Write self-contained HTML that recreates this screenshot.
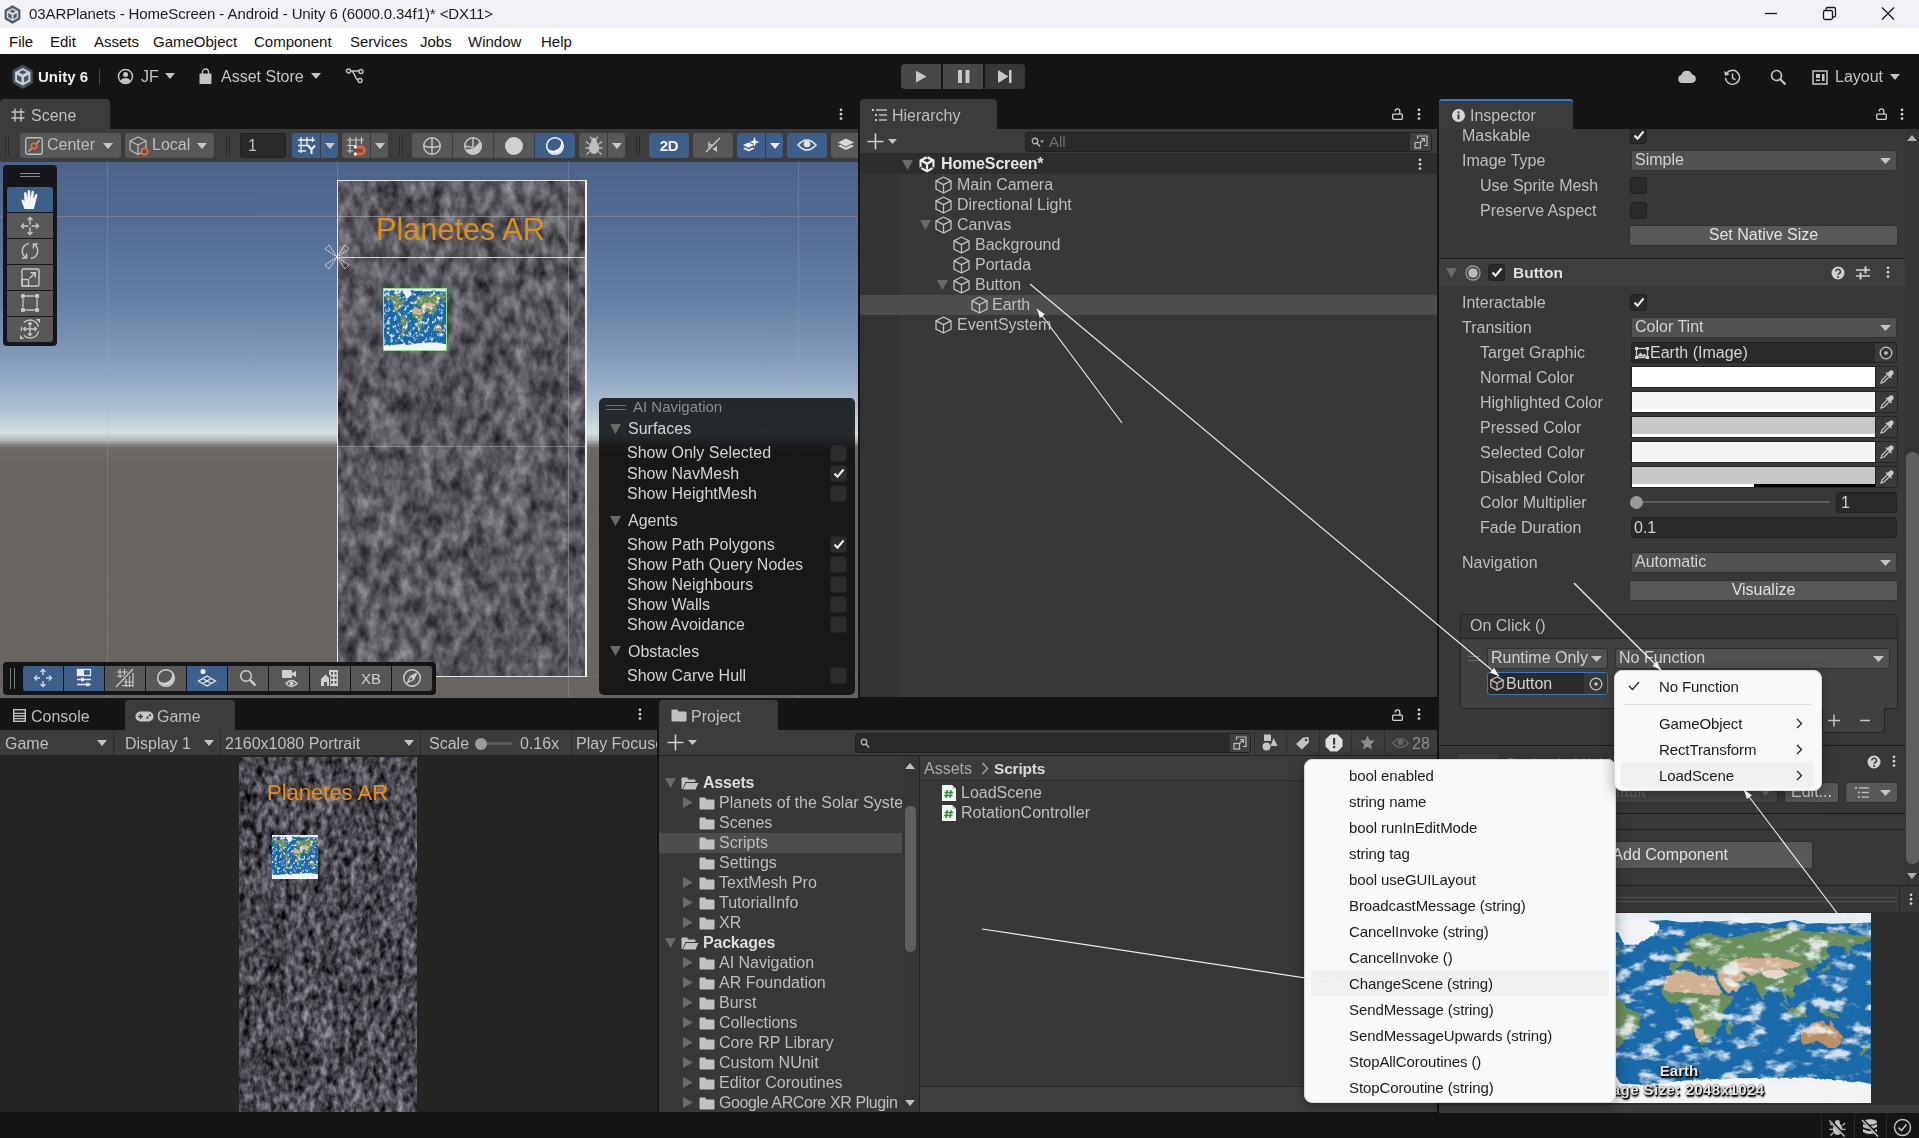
<!DOCTYPE html>
<html><head><meta charset="utf-8"><title>Unity</title>
<style>
*{box-sizing:border-box;margin:0;padding:0}
html,body{width:1919px;height:1138px;overflow:hidden;background:#151515}
body{font-family:"Liberation Sans",sans-serif;font-size:16px;color:#bebebe;position:relative}
.t{will-change:transform}
.w{will-change:auto}
.a{position:absolute}
.t{position:absolute;white-space:nowrap;line-height:20px;height:20px}
.w{font-size:15px;color:#111}
.btn{position:absolute;background:#585858;border-radius:3px}
.blue{background:#46607c}
.inp{position:absolute;background:#2a2a2a;border:1px solid #212121;border-radius:3px}
.chk{position:absolute;width:16px;height:16px;background:#2a2a2a;border:1px solid #212121;border-radius:3px}
.tab{position:absolute;background:#3c3c3c;border-radius:4px 4px 0 0}
svg{position:absolute;overflow:visible}
.pop{position:absolute;background:#f9f9f9;border-radius:8px;box-shadow:0 4px 14px rgba(0,0,0,.35);border:1px solid #d8d8d8}
.pop .t{color:#1a1a1a;font-size:15px;letter-spacing:-0.2px}
</style></head><body>
<!-- TITLEBAR -->
<div class="a" id="title" style="left:0;top:0;width:1919px;height:28px;background:#f1f2f8"></div>
<div class="a" id="menubar" style="left:0;top:28px;width:1919px;height:26px;background:#fff"></div>
<div class="a" id="apptb" style="left:0;top:54px;width:1919px;height:75px;background:#151515"></div>
<!--SECTION:TOP-->
<!-- title -->
<svg style="left:4px;top:4.5px" width="17" height="19" viewBox="0 0 22 26"><path d="M11 0.8 L21.3 6.7 V19.3 L11 25.2 L0.7 19.3 V6.7 Z" fill="#55606c" stroke="#3a434c" stroke-width="0.8"/><path d="M11 4 L18.8 8.5 V17.5 L11 22 L3.2 17.5 V8.5 Z" fill="#d5dae2"/><g fill="#55606c"><path d="M11 6.2 L15 8.5 L11 10.8 L7 8.5 Z"/><path d="M5.2 11 L9.8 13.6 V19 L5.2 16.3 Z"/><path d="M16.8 11 L12.2 13.6 V19 L16.8 16.3 Z"/></g></svg>
<div class="t w" style="left:29px;top:4px;color:#1b1b1b;letter-spacing:-.09px;will-change:transform">03ARPlanets - HomeScreen - Android - Unity 6 (6000.0.34f1)* &lt;DX11&gt;</div>
<svg style="left:1760px;top:0" width="140" height="28" viewBox="0 0 140 28"><g stroke="#1a1a1a" stroke-width="1.3" fill="none"><path d="M5 13.5 H17"/><rect x="63.5" y="10.5" width="9" height="9" rx="1.5"/><path d="M66 10.5 V9 a1.5 1.5 0 0 1 1.5 -1.5 H74 a1.5 1.5 0 0 1 1.5 1.5 V15.5 a1.5 1.5 0 0 1 -1.5 1.5 H72.5"/><path d="M122 7.5 L134 19.5 M134 7.5 L122 19.5"/></g></svg>
<!-- menu -->
<div class="t w" style="left:9px;top:32px">File</div>
<div class="t w" style="left:50px;top:32px">Edit</div>
<div class="t w" style="left:94px;top:32px">Assets</div>
<div class="t w" style="left:153px;top:32px">GameObject</div>
<div class="t w" style="left:254px;top:32px">Component</div>
<div class="t w" style="left:350px;top:32px">Services</div>
<div class="t w" style="left:420px;top:32px">Jobs</div>
<div class="t w" style="left:468px;top:32px">Window</div>
<div class="t w" style="left:541px;top:32px">Help</div>
<!-- app toolbar -->
<svg style="left:11.5px;top:64px" width="21.5" height="25.5" viewBox="0 0 22 26"><path d="M11 0.8 L21.3 6.7 V19.3 L11 25.2 L0.7 19.3 V6.7 Z" fill="#4a545f" stroke="#2f363e" stroke-width="0.8"/><path d="M11 4 L18.8 8.5 V17.5 L11 22 L3.2 17.5 V8.5 Z" fill="#cdd2da"/><g fill="#4a545f"><path d="M11 6.2 L15 8.5 L11 10.8 L7 8.5 Z"/><path d="M5.2 11 L9.8 13.6 V19 L5.2 16.3 Z"/><path d="M16.8 11 L12.2 13.6 V19 L16.8 16.3 Z"/></g></svg>
<div class="t" style="left:38px;top:67px;color:#f0f0f0;font-weight:bold;font-size:15px">Unity 6</div>
<div class="a" style="left:99px;top:69px;width:1px;height:16px;background:#4a4a4a"></div>
<svg style="left:117px;top:68px" width="17" height="17" viewBox="0 0 17 17"><circle cx="8.5" cy="8.5" r="7" fill="none" stroke="#c4c4c4" stroke-width="1.5"/><circle cx="8.5" cy="6.6" r="2.5" fill="#c4c4c4"/><path d="M3.6 12.8 a5.2 4.2 0 0 1 9.8 0 a6.5 6.5 0 0 1 -9.8 0z" fill="#c4c4c4"/></svg>
<div class="t" style="left:141px;top:67px;color:#c4c4c4">JF</div>
<svg style="left:164px;top:72px" width="12" height="8" viewBox="0 0 12 8"><path d="M1 1 H11 L6 7 Z" fill="#c4c4c4"/></svg>
<svg style="left:198px;top:68px" width="15" height="17" viewBox="0 0 15 17"><path d="M1.5 5.5 H13.5 V15 a1 1 0 0 1 -1 1 H2.5 a1 1 0 0 1 -1 -1 Z" fill="#c4c4c4"/><path d="M4.5 6 V4 a3 3 0 0 1 6 0 V6" fill="none" stroke="#c4c4c4" stroke-width="1.3"/></svg>
<div class="t" style="left:221px;top:67px;color:#c4c4c4">Asset Store</div>
<svg style="left:310px;top:72px" width="12" height="8" viewBox="0 0 12 8"><path d="M1 1 H11 L6 7 Z" fill="#c4c4c4"/></svg>
<svg style="left:345px;top:67px" width="20" height="18" viewBox="0 0 20 18"><g fill="none" stroke="#c4c4c4" stroke-width="1.4"><circle cx="3.5" cy="4" r="2"/><circle cx="16" cy="4.5" r="2"/><circle cx="15" cy="13.5" r="2"/><path d="M5.5 4 H14 M7 4 C9.5 5 10 12 13 13.2"/></g></svg>
<div class="a" style="left:901px;top:64px;width:40px;height:25px;background:#484848;border-radius:4px 0 0 4px"></div>
<div class="a" style="left:943px;top:64px;width:40px;height:25px;background:#484848"></div>
<div class="a" style="left:985px;top:64px;width:40px;height:25px;background:#383838;border-radius:0 4px 4px 0"></div>
<svg style="left:901px;top:64px" width="124" height="25" viewBox="0 0 124 25"><g fill="#c8c8c8"><path d="M15 6.8 L25.6 12.5 L15 18.6 Z"/><rect x="57" y="6" width="4" height="13"/><rect x="64.5" y="6" width="4" height="13"/><path d="M97 6 L107.5 12.5 L97 19 Z"/><rect x="108" y="6" width="2.5" height="13"/></g></svg>
<svg style="left:1677px;top:69px" width="20" height="16" viewBox="0 0 20 16"><path d="M5 14 a4 4 0 0 1 -0.6 -7.9 a5.5 5.5 0 0 1 10.6 -0.6 a4.3 4.3 0 0 1 0.3 8.5 Z" fill="#c4c4c4"/></svg>
<svg style="left:1723px;top:68px" width="19" height="19" viewBox="0 0 19 19"><g fill="none" stroke="#c4c4c4" stroke-width="1.5"><path d="M3.2 6.2 A7 7 0 1 1 2.5 10"/><path d="M9.5 5.5 V10 L12.5 11.8"/></g><path d="M1 3 L2.2 8 L6.8 6.2 Z" fill="#c4c4c4"/></svg>
<svg style="left:1769px;top:68px" width="19" height="19" viewBox="0 0 19 19"><g fill="none" stroke="#c4c4c4"><circle cx="7.5" cy="7.5" r="5" stroke-width="1.6"/><path d="M11.3 11.3 L16.5 16.5" stroke-width="2.2"/></g></svg>
<svg style="left:1812px;top:70px" width="16" height="15" viewBox="0 0 16 15"><rect x="1" y="1" width="14" height="13" fill="none" stroke="#c4c4c4" stroke-width="1.5"/><rect x="4" y="4" width="4" height="4" fill="#c4c4c4"/><rect x="10" y="4" width="2.5" height="7" fill="#c4c4c4"/><rect x="4" y="9.5" width="4" height="1.5" fill="#c4c4c4"/></svg>
<div class="t" style="left:1835px;top:67px;color:#c4c4c4">Layout</div>
<svg style="left:1889px;top:73px" width="12" height="8" viewBox="0 0 12 8"><path d="M1 1 H11 L6 7 Z" fill="#c4c4c4"/></svg>
<!--END:TOP-->
<!--SECTION:SCENE-->
<svg width="0" height="0" style="position:absolute"><defs>
<filter id="stone" x="0" y="0" width="100%" height="100%" color-interpolation-filters="sRGB"><feTurbulence type="fractalNoise" baseFrequency="0.095 0.06" numOctaves="4" seed="7"/><feColorMatrix values="1 0 0 0 0  1 0 0 0 0  1 0 0 0 0  0 0 0 0 1" result="n1"/><feTurbulence type="fractalNoise" baseFrequency="0.03 0.02" numOctaves="2" seed="23"/><feColorMatrix values="1 0 0 0 0  1 0 0 0 0  1 0 0 0 0  0 0 0 0 1" result="n2"/><feComposite in="n1" in2="n2" operator="arithmetic" k1="0" k2="1.1" k3="0.4" k4="-0.25" result="n"/><feColorMatrix in="n" values="0.52 0 0 0 0.095  0.51 0 0 0 0.093  0.525 0 0 0 0.112  0 0 0 0 1"/></filter>
<filter id="stone2" x="0" y="0" width="100%" height="100%" color-interpolation-filters="sRGB"><feTurbulence type="fractalNoise" baseFrequency="0.17 0.11" numOctaves="4" seed="9"/><feColorMatrix values="1 0 0 0 0  1 0 0 0 0  1 0 0 0 0  0 0 0 0 1" result="n1"/><feTurbulence type="fractalNoise" baseFrequency="0.04 0.028" numOctaves="2" seed="31"/><feColorMatrix values="1 0 0 0 0  1 0 0 0 0  1 0 0 0 0  0 0 0 0 1" result="n2"/><feComposite in="n1" in2="n2" operator="arithmetic" k1="0" k2="1.15" k3="0.45" k4="-0.3" result="n"/><feColorMatrix in="n" values="0.66 0 0 0 -0.04  0.65 0 0 0 -0.04  0.68 0 0 0 -0.025  0 0 0 0 1"/></filter>
<filter id="cloud" x="0" y="0" width="100%" height="100%" color-interpolation-filters="sRGB"><feTurbulence type="fractalNoise" baseFrequency="0.05 0.085" numOctaves="5" seed="11"/><feColorMatrix values="0 0 0 0 0.96  0 0 0 0 0.97  0 0 0 0 0.98  4.5 0 0 0 -2.35"/></filter>
<filter id="rough"><feTurbulence type="fractalNoise" baseFrequency="0.25" numOctaves="2" seed="4" result="t"/><feDisplacementMap in="SourceGraphic" in2="t" scale="3.5"/></filter>
<symbol id="earth" viewBox="0 0 360 180" preserveAspectRatio="none">
<rect width="360" height="180" fill="#1a69a9"/>
<g filter="url(#rough)">
<g fill="#6b8f5d">
<polygon points="12,24 24,19 40,20 55,20 70,22 85,18 98,17 102,28 90,32 98,38 102,35 115,30 124,38 114,46 110,48 105,55 99,59 100,65 97,60 90,61 83,64 83,71 89,72 92,69 93,74 97,80 102,82 95,79 85,74 75,70 70,66 67,59 62,56 56,50 56,42 48,35 40,30 28,32 20,35 15,30 12,24"/><polygon points="100,81 108,78 118,80 128,85 130,90 145,96 142,104 139,112 132,116 126,124 122,128 117,132 114,137 112,144 106,140 107,128 109,118 110,108 104,104 99,95 100,81"/><polygon points="163,75 164,68 170,60 174,55 183,53 190,53 191,57 200,59 205,58 212,59 215,66 218,72 223,78 231,79 228,85 221,93 219,98 220,105 215,112 212,117 207,123 200,125 197,119 192,108 193,98 189,91 189,86 182,84 172,86 167,82 163,75"/><polygon points="224,106 229,102 230,106 227,115 224,114 224,106"/><polygon points="170,54 171,47 178,47 179,44 175,42 182,39 188,36 188,33 192,35 190,31 185,31 185,28 192,24 198,21 208,19 220,23 224,24 240,21 242,35 235,45 228,48 220,45 215,48 208,49 204,54 200,51 196,49 198,50 195,52 192,46 188,46 183,47 180,51 175,54 170,54"/><polygon points="175,40 181,39 180,36 178,34 177,32 174,33 175,36 177,37 175,38 175,40"/><polygon points="240,21 248,18 260,17 275,14 285,13 293,16 310,18 320,17 340,20 350,21 360,22 360,25 352,29 343,30 342,34 336,39 335,32 322,31 318,36 321,40 315,46 310,48 307,52 306,56 302,51 298,52 302,60 299,65 293,68 288,69 287,73 289,78 285,81 281,77 280,83 284,89 280,86 278,80 277,74 272,69 268,68 264,72 260,77 258,82 253,73 252,69 247,65 241,65 237,64 232,62 229,60 231,65 236,66 239,69 235,73 225,77 223,74 219,69 215,62 216,54 208,53 208,49 215,48 220,45 228,48 235,45 242,35 240,21"/><polygon points="294,112 302,108 306,104 311,102 316,102 317,106 321,107 322,101 326,109 333,116 331,124 327,128 320,128 316,125 311,122 304,123 296,125 294,118 294,112" fill="#b98f66"/><polygon points="352,125 358,128 355,131 351,135 347,136 352,131 352,125"/><polygon points="275,85 284,95 286,96 294,98 300,99 298,93 297,87 290,89 283,92 278,87 275,85"/><polygon points="311,91 321,93 328,96 330,100 323,99 318,98 312,93 311,91"/><polygon points="310,58 315,56 320,55 321,50 322,45 320,48 317,53 312,55 310,58"/>
</g>
<g fill="#d0b092">
<polygon points="165,73 167,62 175,56 190,55 200,60 212,60 216,68 220,75 215,78 200,77 185,75 172,75"/>
<polygon points="216,57 225,54 235,54 242,60 240,64 235,65 230,62 236,68 236,72 226,76 222,72 217,64"/>
<polygon points="230,45 240,42 255,43 270,42 285,45 295,48 290,52 280,53 268,55 258,54 248,60 240,55 232,52"/>
<polygon points="194,108 202,110 205,118 199,123 195,117"/>
<polygon points="62,56 75,52 80,60 74,67 68,62"/>
<polygon points="110,110 114,115 114,135 110,138 109,120"/>
</g>
<g fill="#e2d8cc"><polygon points="256,56 264,54 276,54 282,57 278,61 268,62 260,60"/></g>
<g fill="#f0f2f5"><polygon points="128,30 138,30 158,20 162,12 150,7 120,8 107,12 122,18 128,30"/><polygon points="60,14 105,7 95,14 80,17"/><polygon points="0,162 30,166 70,163 110,160 120,154 125,162 160,163 180,159 220,157 260,156 300,156 330,158 350,162 360,162 360,180 0,180"/></g>
</g>
<rect width="360" height="180" filter="url(#cloud)" opacity=".85"/>
<path d="M0 0 H360 L360 9.0 L348 9.5 L336 9.7 L324 10.3 L312 9.5 L300 10.2 L288 6.6 L276 8.4 L264 10.3 L252 9.1 L240 10.1 L228 7.0 L216 8.4 L204 7.5 L192 8.7 L180 8.8 L168 6.6 L156 7.4 L144 7.6 L132 10.2 L120 9.6 L108 7.1 L96 9.7 L84 7.1 L72 9.0 L60 7.0 L48 6.5 L36 10.0 L24 7.3 L12 7.4 L0 10.4 Z" fill="#f2f4f6" opacity=".94"/>
<path d="M0 180 H360 L360 161.9 L348 159.3 L336 162.3 L324 160.4 L312 161.1 L300 158.9 L288 162.2 L276 161.1 L264 162.3 L252 162.0 L240 159.3 L228 159.6 L216 161.7 L204 161.7 L192 161.3 L180 162.4 L168 163.7 L156 161.0 L144 164.1 L132 162.5 L120 162.4 L108 164.7 L96 163.2 L84 162.4 L72 163.2 L60 164.2 L48 161.3 L36 165.4 L24 161.1 L12 164.4 L0 164.8 Z" fill="#f2f4f6" opacity=".96"/>
</symbol>
</defs></svg>

<div class="tab" style="left:0;top:99px;width:110px;height:30px"></div>
<svg style="left:11px;top:108px" width="14" height="14" viewBox="0 0 14 14"><path d="M4 0.5 V13.5 M10 0.5 V13.5 M0.5 4 H13.5 M0.5 10 H13.5" stroke="#c4c4c4" stroke-width="1.4" fill="none"/></svg>
<div class="t" style="left:31px;top:106px">Scene</div>
<svg style="left:839px;top:108.2px" width="4" height="13" viewBox="0 0 4 13"><g fill="#d0d0d0"><circle cx="2" cy="1.8" r="1.35"/><circle cx="2" cy="6.2" r="1.35"/><circle cx="2" cy="10.6" r="1.35"/></g></svg>
<div class="a" id="scenetb" style="left:0;top:129px;width:858px;height:33px;background:#3c3c3c"></div>
<div class="a" style="left:5px;top:135px;width:1px;height:21px;background:#2a2a2a"></div><div class="a" style="left:8px;top:135px;width:1px;height:21px;background:#2a2a2a"></div>
<div class="a" style="left:20px;top:133px;width:101px;height:25px;background:#585858;border-radius:3px"></div>
<svg style="left:25px;top:137px" width="18" height="18" viewBox="0 0 18 18"><rect x=".75" y=".75" width="16.5" height="16.5" rx="2" fill="none" stroke="#bdbdbd" stroke-width="1.3"/><path d="M3.5 14.5 L14.5 3.5" stroke="#bdbdbd" stroke-width="1.2"/><circle cx="9" cy="9" r="2.8" fill="#585858" stroke="#f0683c" stroke-width="1.6"/></svg>
<div class="t" style="left:47px;top:135px">Center</div>
<svg style="left:103px;top:143px" width="10" height="6" viewBox="0 0 10 6"><path d="M0 0 H10 L5 6 Z" fill="#c8c8c8"/></svg>
<div class="a" style="left:125px;top:133px;width:89px;height:25px;background:#585858;border-radius:3px"></div>
<svg style="left:129px;top:136px" width="22" height="21" viewBox="0 0 22 21"><g fill="none" stroke="#bdbdbd" stroke-width="1.3" stroke-linejoin="round"><path d="M9 1 L17 5 V14 L9 18.5 L1 14 V5 Z"/><path d="M1 5 L9 9 L17 5 M9 9 V18.5"/></g><circle cx="15.5" cy="15.5" r="3.2" fill="#585858" stroke="#f0683c" stroke-width="1.7"/></svg>
<div class="t" style="left:152px;top:135px">Local</div>
<svg style="left:197px;top:143px" width="10" height="6" viewBox="0 0 10 6"><path d="M0 0 H10 L5 6 Z" fill="#c8c8c8"/></svg>
<div class="a" style="left:226px;top:135px;width:1px;height:21px;background:#2a2a2a"></div><div class="a" style="left:229px;top:135px;width:1px;height:21px;background:#2a2a2a"></div>
<div class="inp" style="left:240px;top:133px;width:46px;height:25px"></div><div class="t" style="left:248px;top:136px">1</div>
<div class="a" style="left:292px;top:133px;width:28px;height:25px;background:#3e5f8a;border-radius:3px 0 0 3px"></div>
<div class="a" style="left:321px;top:133px;width:17px;height:25px;background:#3e5f8a;border-radius:0 3px 3px 0"></div>
<svg style="left:325px;top:143px" width="10" height="6" viewBox="0 0 10 6"><path d="M0 0 H10 L5 6 Z" fill="#c8c8c8"/></svg>
<svg style="left:297px;top:136px" width="20" height="19" viewBox="0 0 20 19"><g stroke="#eee" stroke-width="1.3" fill="none"><path d="M4 1 V17 M10 1 V9 M15.5 1 V6 M1 4 H18 M1 9.5 H12 M1 15 H9"/><path d="M11 9.5 L14.5 13.5 L18 9.5 M14.5 13.5 V18" stroke-width="2"/></g></svg>
<div class="a" style="left:342px;top:133px;width:28px;height:25px;background:#585858;border-radius:3px 0 0 3px"></div>
<div class="a" style="left:371px;top:133px;width:17px;height:25px;background:#585858;border-radius:0 3px 3px 0"></div>
<svg style="left:375px;top:143px" width="10" height="6" viewBox="0 0 10 6"><path d="M0 0 H10 L5 6 Z" fill="#c8c8c8"/></svg>
<svg style="left:346px;top:136px" width="22" height="20" viewBox="0 0 22 20"><g stroke="#c8c8c8" stroke-width="1.2" fill="none"><path d="M4 1 V17 M10 1 V10 M15.5 1 V8 M1 4 H18 M1 9.5 H9 M1 15 H7"/></g><path d="M9.5 11 H15 a3.5 3.5 0 0 1 0 7 H9.5" fill="none" stroke="#f0592b" stroke-width="2.8"/><rect x="8" y="9.6" width="2.6" height="2.8" fill="#fff"/><rect x="8" y="16.6" width="2.6" height="2.8" fill="#fff"/></svg>
<div class="a" style="left:399px;top:135px;width:1px;height:21px;background:#2a2a2a"></div><div class="a" style="left:402px;top:135px;width:1px;height:21px;background:#2a2a2a"></div>
<div class="a" style="left:412px;top:133px;width:40px;height:25px;background:#585858;border-radius:3px 0 0 3px"></div>
<div class="a" style="left:453px;top:133px;width:40px;height:25px;background:#585858;border-radius:0"></div>
<div class="a" style="left:494px;top:133px;width:40px;height:25px;background:#585858;border-radius:0"></div>
<div class="a" style="left:535px;top:133px;width:40px;height:25px;background:#3e5f8a;border-radius:0 3px 3px 0"></div>
<svg style="left:422px;top:136px" width="20" height="20" viewBox="0 0 20 20"><g fill="none" stroke="#c8c8c8" stroke-width="1.4"><circle cx="10" cy="10" r="8.3"/><path d="M10 1.7 V18.3 M1.7 10 Q10 12.5 18.3 10"/></g></svg>
<svg style="left:463px;top:136px" width="20" height="20" viewBox="0 0 20 20"><g fill="none" stroke="#c8c8c8" stroke-width="1.4"><circle cx="10" cy="10" r="8.3"/><path d="M10 1.7 V11 M1.7 10 Q6 11.5 10 11"/></g><path d="M3 13 Q9 14 14 9 Q17 6 16 4 A8.3 8.3 0 0 1 5 16.5 Z" fill="#c8c8c8"/></svg>
<svg style="left:504px;top:136px" width="20" height="20" viewBox="0 0 20 20"><circle cx="10" cy="10" r="9" fill="#d0d0d0"/></svg>
<svg style="left:545px;top:136px" width="20" height="20" viewBox="0 0 20 20"><circle cx="10" cy="10" r="8.3" fill="none" stroke="#f2f2f2" stroke-width="1.5"/><path d="M2.5 12 A8 8 0 0 0 17.5 12 Q18.5 8 16 4.5 Q17 12 10 14.5 Q5 15.5 2.5 12Z" fill="#f2f2f2"/></svg>
<div class="a" style="left:579px;top:133px;width:28px;height:25px;background:#585858;border-radius:3px 0 0 3px"></div>
<div class="a" style="left:608px;top:133px;width:17px;height:25px;background:#585858;border-radius:0 3px 3px 0"></div>
<svg style="left:612px;top:143px" width="10" height="6" viewBox="0 0 10 6"><path d="M0 0 H10 L5 6 Z" fill="#c8c8c8"/></svg>
<svg style="left:584px;top:136px" width="20" height="20" viewBox="0 0 20 20"><ellipse cx="10" cy="11.5" rx="5.2" ry="6.5" fill="#bdbdbd"/><circle cx="10" cy="4.6" r="2.8" fill="#bdbdbd"/><g stroke="#bdbdbd" stroke-width="1.3" fill="none"><path d="M5 8 L2 5.5 M15 8 L18 5.5 M4.8 12 H1.5 M15.2 12 H18.5 M5.5 15.5 L2.5 18.5 M14.5 15.5 L17.5 18.5 M7.5 2.5 L6 0.8 M12.5 2.5 L14 0.8"/></g></svg>
<div class="a" style="left:636px;top:135px;width:1px;height:21px;background:#2a2a2a"></div><div class="a" style="left:639px;top:135px;width:1px;height:21px;background:#2a2a2a"></div>
<div class="a" style="left:649px;top:133px;width:40px;height:25px;background:#3e5f8a;border-radius:3px"></div>
<div class="t" style="left:649px;top:136px;width:40px;text-align:center;color:#f2f2f2;font-weight:bold;font-size:15px;letter-spacing:-.3px">2D</div>
<div class="a" style="left:693px;top:133px;width:40px;height:25px;background:#585858;border-radius:3px"></div>
<svg style="left:704px;top:137px" width="18" height="17" viewBox="0 0 18 17"><path d="M2 15 L16 1" stroke="#c8c8c8" stroke-width="1.5"/><path d="M5 5 V11 M8 8 L5 8" stroke="#c8c8c8" stroke-width="1.3" fill="none"/><path d="M13 9 V15 L8.5 12 Z" fill="#c8c8c8"/></svg>
<div class="a" style="left:737px;top:133px;width:28px;height:25px;background:#3e5f8a;border-radius:3px 0 0 3px"></div>
<div class="a" style="left:766px;top:133px;width:17px;height:25px;background:#3e5f8a;border-radius:0 3px 3px 0"></div>
<svg style="left:770px;top:143px" width="10" height="6" viewBox="0 0 10 6"><path d="M0 0 H10 L5 6 Z" fill="#e8e8e8"/></svg>
<svg style="left:742px;top:136px" width="19" height="19" viewBox="0 0 19 19"><g fill="#f2f2f2"><path d="M1 9 L6.5 6.5 L12 9 L6.5 11.8 Z"/><path d="M1 12.5 L3 11.6 L6.5 13.4 L10.5 11.4 L12.5 12.5 L6.5 15.6 Z"/><path d="M12.5 1 L13.8 4.7 L17.5 6 L13.8 7.3 L12.5 11 L11.2 7.3 L7.5 6 L11.2 4.7 Z"/></g></svg>
<div class="a" style="left:787px;top:133px;width:40px;height:25px;background:#3e5f8a;border-radius:3px"></div>
<svg style="left:797px;top:138px" width="20" height="14" viewBox="0 0 20 14"><path d="M1 7 Q10 -3 19 7 Q10 17 1 7 Z" fill="none" stroke="#e8e8e8" stroke-width="1.5"/><circle cx="10" cy="6" r="3.3" fill="#e0e0e0"/></svg>
<div class="a" style="left:831px;top:133px;width:27px;height:25px;background:#585858;border-radius:3px 0 0 3px"></div>
<svg style="left:837px;top:138px" width="18" height="15" viewBox="0 0 18 15"><g fill="#d8d8d8"><path d="M9 0.5 L17 4.5 L9 8.5 L1 4.5 Z"/><path d="M1 8 L3.5 6.8 L9 9.6 L14.5 6.8 L17 8 L9 12 Z"/></g></svg>
<!-- scene view -->
<div class="a" id="sceneview" style="left:0;top:162px;width:858px;height:536px;overflow:hidden;background:linear-gradient(to bottom,#4c6389 0px,#536b93 55px,#647ea4 135px,#7790b3 175px,#91a8c4 215px,#aabdd0 243px,#c4d2da 260px,#d3dfe2 271px,#b5babb 278px,#6e6865 285px,#6b6562 300px,#6a6461 536px)">
 <div class="a" style="left:107px;top:0;width:1px;height:536px;background:rgba(170,175,185,.28)"></div>
 <div class="a" style="left:337px;top:0;width:1px;height:536px;background:rgba(170,175,185,.28)"></div>
 <div class="a" style="left:568px;top:0;width:1px;height:536px;background:rgba(170,175,185,.28)"></div>
 <div class="a" style="left:798px;top:0;width:1px;height:536px;background:rgba(170,175,185,.28)"></div>
 <div class="a" style="left:0;top:54px;width:858px;height:1px;background:rgba(160,160,150,.4)"></div>
 <div class="a" style="left:0;top:284px;width:858px;height:1px;background:rgba(150,150,150,.35)"></div>
 <div class="a" style="left:0;top:514px;width:858px;height:1px;background:rgba(150,150,150,.25)"></div>
 <svg style="left:337px;top:18px" width="250" height="497"><rect width="250" height="497" filter="url(#stone)"/></svg>
 <div class="a" style="left:337px;top:18px;width:250px;height:497px;border:1px solid #e6e6e6;border-right:2px solid #eee"></div>
 <div class="a" style="left:337px;top:54px;width:249px;height:1px;background:rgba(190,190,195,.5)"></div>
 <div class="a" style="left:568px;top:18px;width:1px;height:497px;background:rgba(190,190,195,.4)"></div>
 <div class="a" style="left:337px;top:284px;width:249px;height:1px;background:rgba(190,190,195,.45)"></div>
 <div class="a" style="left:337px;top:95px;width:249px;height:1px;background:rgba(235,235,235,.85)"></div>
 <div class="t" style="left:376px;top:50px;height:36px;line-height:36px;font-size:30.7px;color:#e28f17">Planetes AR</div>
 <svg style="left:383px;top:126px" width="64" height="63"><use href="#earth" width="64" height="63"/><rect x=".5" y=".5" width="63" height="62" fill="none" stroke="#8fe08a" stroke-width="1"/></svg>
 <svg style="left:322px;top:80px" width="30" height="30" viewBox="-15 -15 30 30"><g fill="none" stroke="#f2f2f2" stroke-width="1" stroke-dasharray="1.5 0.8"><path d="M0 0 L-12 -8 L-8 -12 Z"/><path d="M0 0 L12 -8 L8 -12 Z"/><path d="M0 0 L-12 8 L-8 12 Z"/><path d="M0 0 L12 8 L8 12 Z"/></g></svg>
</div>
<div class="a" style="left:3px;top:165px;width:54px;height:181px;background:#15171c;border-radius:4px"></div>
<div class="a" style="left:20px;top:173px;width:20px;height:1px;background:#8a8a8a"></div><div class="a" style="left:20px;top:176px;width:20px;height:1px;background:#8a8a8a"></div>
<div class="a" style="left:7px;top:187px;width:46px;height:25px;background:#3e5f8a;border-radius:3px 3px 0 0"></div>
<div class="a" style="left:7px;top:213px;width:46px;height:25px;background:#585858;border-radius:0"></div>
<div class="a" style="left:7px;top:239px;width:46px;height:25px;background:#585858;border-radius:0"></div>
<div class="a" style="left:7px;top:265px;width:46px;height:25px;background:#585858;border-radius:0"></div>
<div class="a" style="left:7px;top:291px;width:46px;height:25px;background:#585858;border-radius:0"></div>
<div class="a" style="left:7px;top:317px;width:46px;height:25px;background:#585858;border-radius:0 0 3px 3px"></div>
<svg style="left:20px;top:189px" width="20" height="21" viewBox="0 0 20 21"><path d="M4.5 20 L2 13.5 Q1 11 2.2 10.5 Q3.4 10 4.5 12.5 L4 4.5 Q4 3 5.2 3 Q6.3 3 6.5 4.5 L7.3 9.5 L7.6 2.5 Q7.7 1 8.9 1 Q10.1 1 10.2 2.5 L10.4 9.3 L11.5 3 Q11.8 1.6 12.9 1.8 Q14 2 13.9 3.5 L13.3 10 L15.2 5.8 Q15.8 4.6 16.8 5 Q17.7 5.5 17.3 6.8 L15.5 13.5 Q15 17 13.5 20 Z" fill="#f4f4f4"/></svg>
<svg style="left:20px;top:216px" width="20" height="20" viewBox="0 0 20 20"><g fill="none" stroke="#c8c8c8" stroke-width="1.4"><path d="M10 1.5 V8.5 M10 11.5 V18.5 M1.5 10 H8.5 M11.5 10 H18.5"/><path d="M7.5 4 L10 1.5 L12.5 4 M7.5 16 L10 18.5 L12.5 16 M4 7.5 L1.5 10 L4 12.5 M16 7.5 L18.5 10 L16 12.5"/></g></svg>
<svg style="left:20px;top:241px" width="20" height="20" viewBox="0 0 20 20"><g fill="none" stroke="#c8c8c8" stroke-width="1.4"><path d="M9 2.6 A7.5 7.5 0 0 0 6.2 16.6 M11 17.4 A7.5 7.5 0 0 0 13.8 3.4"/><path d="M2.2 17 H6.6 V12.6 M17.8 3 H13.4 V7.4"/></g></svg>
<svg style="left:21px;top:268px" width="19" height="19" viewBox="0 0 19 19"><g fill="none" stroke="#c8c8c8" stroke-width="1.4"><rect x="1" y="1" width="17" height="17" rx="1.5"/><rect x="1" y="11.5" width="6.5" height="6.5"/><path d="M8.5 10.5 L14 5 M9.5 4.7 H14.3 V9.5"/></g></svg>
<svg style="left:20px;top:293px" width="20" height="20" viewBox="0 0 20 20"><path d="M3 3 H17 V17 H3 Z" fill="none" stroke="#c8c8c8" stroke-width="1.3" stroke-dasharray="9 5" stroke-dashoffset="-2.5"/><g fill="#c8c8c8"><rect x="1" y="1" width="4" height="4" rx="1"/><rect x="15" y="1" width="4" height="4" rx="1"/><rect x="1" y="15" width="4" height="4" rx="1"/><rect x="15" y="15" width="4" height="4" rx="1"/></g></svg>
<svg style="left:19px;top:318px" width="22" height="22" viewBox="0 0 22 22"><g fill="none" stroke="#c8c8c8" stroke-width="1.3"><path d="M5 4.5 A8.5 8.5 0 0 1 19.3 9 M19.5 13 A8.5 8.5 0 0 1 5 17.5 M2.6 13 A8.5 8.5 0 0 1 2.6 9"/><path d="M11 4.5 V17.5 M4.5 11 H17.5 M9 6.5 L11 4.5 L13 6.5 M9 15.5 L11 17.5 L13 15.5 M6.5 9 L4.5 11 L6.5 13 M15.5 9 L17.5 11 L15.5 13"/></g><path d="M1 21 L1 17 L5 21 Z M21 1 L17 1 L21 5 Z" fill="#c8c8c8"/></svg>
<div class="a" style="left:3px;top:662px;width:433px;height:33px;background:#141414;border-radius:4px"></div>
<div class="a" style="left:10px;top:668px;width:1px;height:21px;background:#7a7a7a"></div><div class="a" style="left:14px;top:668px;width:1px;height:21px;background:#7a7a7a"></div>
<div class="a" style="left:23px;top:666px;width:40px;height:25px;background:#3e5f8a;border-radius:3px 0 0 3px"></div>
<div class="a" style="left:64px;top:666px;width:40px;height:25px;background:#3e5f8a;border-radius:0"></div>
<div class="a" style="left:105px;top:666px;width:40px;height:25px;background:#585858;border-radius:0"></div>
<div class="a" style="left:146px;top:666px;width:40px;height:25px;background:#585858;border-radius:0"></div>
<div class="a" style="left:187px;top:666px;width:40px;height:25px;background:#3e5f8a;border-radius:0"></div>
<div class="a" style="left:228px;top:666px;width:40px;height:25px;background:#585858;border-radius:0"></div>
<div class="a" style="left:269px;top:666px;width:40px;height:25px;background:#585858;border-radius:0"></div>
<div class="a" style="left:310px;top:666px;width:40px;height:25px;background:#585858;border-radius:0"></div>
<div class="a" style="left:351px;top:666px;width:40px;height:25px;background:#585858;border-radius:0"></div>
<div class="a" style="left:392px;top:666px;width:40px;height:25px;background:#585858;border-radius:0 3px 3px 0"></div>
<svg style="left:33px;top:668px" width="20" height="20" viewBox="0 0 20 20"><g fill="none" stroke="#d0d8e4" stroke-width="1.4"><path d="M10 1.5 V7 M10 13 V18.5 M1.5 10 H7 M13 10 H18.5"/><path d="M7.5 4 L10 1.5 L12.5 4 M7.5 16 L10 18.5 L12.5 16 M4 7.5 L1.5 10 L4 12.5 M16 7.5 L18.5 10 L16 12.5"/></g></svg>
<svg style="left:74px;top:668px" width="20" height="20" viewBox="0 0 20 20"><rect x="3.5" y="1.5" width="13" height="6" fill="none" stroke="#e8e8e8" stroke-width="1.3"/><rect x="4" y="2" width="6" height="5" fill="#e8e8e8"/><path d="M3 11.5 H17 M3 16.5 H17" stroke="#e8e8e8" stroke-width="1.3"/><rect x="7" y="9.7" width="3" height="3.6" fill="#e8e8e8"/><rect x="12" y="14.7" width="3" height="3.6" fill="#e8e8e8"/></svg>
<svg style="left:115px;top:668px" width="20" height="20" viewBox="0 0 20 20"><g stroke="#c8c8c8" stroke-width="1.2" fill="none"><path d="M5 1 V10 M9.5 1 V7 M2 4 H13 M2 8 H9 M1 19 L18 1 M11 11 V19 M14.5 8 V19 M18 5 V19 M9 14 H18.5 M7 17.5 H18.5"/></g></svg>
<svg style="left:156px;top:668px" width="20" height="20" viewBox="0 0 20 20"><circle cx="10" cy="10" r="8.3" fill="none" stroke="#d0d0d0" stroke-width="1.5"/><path d="M2.5 12 A8 8 0 0 0 17.5 12 Q18.5 8 16 4.5 Q17 12 10 14.5 Q5 15.5 2.5 12Z" fill="#d0d0d0"/></svg>
<svg style="left:197px;top:668px" width="20" height="20" viewBox="0 0 20 20"><circle cx="6" cy="3.5" r="2.6" fill="#e8e8e8"/><g fill="none" stroke="#e8e8e8" stroke-width="1.3"><path d="M10 8 L18.5 13 L10 18 L1.5 13 Z M5.7 10.5 L14.3 15.5 M14.3 10.5 L5.7 15.5"/></g></svg>
<svg style="left:238px;top:668px" width="20" height="20" viewBox="0 0 20 20"><circle cx="8" cy="8" r="5.3" fill="none" stroke="#d0d0d0" stroke-width="1.5"/><path d="M12 12 L17.5 17.5" stroke="#d0d0d0" stroke-width="2.4"/></svg>
<svg style="left:279px;top:669px" width="20" height="20" viewBox="0 0 20 20"><rect x="3" y="1" width="10" height="8" rx="1" fill="#d0d0d0"/><path d="M13 4 L17 2 V8 L13 6 Z" fill="#d0d0d0"/><path d="M7 14.5 Q12.5 8.5 18 14.5 Q12.5 20.5 7 14.5 Z" fill="none" stroke="#d0d0d0" stroke-width="1.4"/><circle cx="12.5" cy="14.5" r="2" fill="#d0d0d0"/></svg>
<svg style="left:320px;top:668px" width="20" height="20" viewBox="0 0 20 20"><path d="M9 2 H18 V18 H9 Z M1 18 V11 L5.5 6.5 L10 11 V18 H7 V14 H4 V18 Z" fill="#d0d0d0"/><g fill="#585858"><rect x="11" y="4" width="2" height="2.5"/><rect x="14.5" y="4" width="2" height="2.5"/><rect x="11" y="8.5" width="2" height="2.5"/><rect x="14.5" y="8.5" width="2" height="2.5"/><rect x="11" y="13" width="2" height="2.5"/><rect x="14.5" y="13" width="2" height="2.5"/><rect x="9" y="7" width="1.2" height="11"/></g></svg>
<div class="t" style="left:351px;top:669px;width:40px;text-align:center;color:#d0d0d0;font-size:15px">XB</div>
<svg style="left:402px;top:668px" width="20" height="20" viewBox="0 0 20 20"><circle cx="10" cy="10" r="8.3" fill="none" stroke="#d0d0d0" stroke-width="1.4"/><path d="M14.5 5.5 L11.5 11.5 L5.5 14.5 L8.5 8.5 Z" fill="none" stroke="#d0d0d0" stroke-width="1.3"/><path d="M14.5 5.5 L11.5 11.5 L8.5 8.5 Z" fill="#d0d0d0"/></svg>
<div class="a" style="left:599px;top:398px;width:256px;height:297px;background:linear-gradient(to bottom,rgba(26,29,32,.93) 0,rgba(26,29,32,.93) 36px,rgba(20,20,20,.95) 52px,rgba(20,20,20,.95) 100%);border-radius:5px"></div>
<div class="a" style="left:606px;top:405px;width:20px;height:1px;background:#6e6e6e"></div><div class="a" style="left:606px;top:409px;width:20px;height:1px;background:#6e6e6e"></div>
<div class="t" style="left:633px;top:397px;color:#8c8c8c;font-size:15px">AI Navigation</div>
<svg style="left:610px;top:424px" width="11" height="10" viewBox="0 0 11 10"><path d="M0 0 H11 L5.5 10 Z" fill="#6a6a6a"/></svg>
<div class="t" style="left:628px;top:419px;color:#d2d2d2">Surfaces</div>
<svg style="left:610px;top:516px" width="11" height="10" viewBox="0 0 11 10"><path d="M0 0 H11 L5.5 10 Z" fill="#6a6a6a"/></svg>
<div class="t" style="left:628px;top:511px;color:#d2d2d2">Agents</div>
<svg style="left:610px;top:646px" width="11" height="10" viewBox="0 0 11 10"><path d="M0 0 H11 L5.5 10 Z" fill="#6a6a6a"/></svg>
<div class="t" style="left:628px;top:641.5px;color:#d2d2d2">Obstacles</div>
<div class="t" style="left:627px;top:443px;color:#d2d2d2">Show Only Selected</div>
<div class="chk" style="left:830px;top:445px;width:17px;height:17px;background:#2c2c2c;border-color:#232323"></div>
<div class="t" style="left:627px;top:463.5px;color:#d2d2d2">Show NavMesh</div>
<div class="chk" style="left:830px;top:465px;width:17px;height:17px;background:#2c2c2c;border-color:#232323"></div>
<svg style="left:833px;top:468px" width="12" height="11" viewBox="0 0 12 11"><path d="M1.5 5.5 L4.5 8.7 L10.5 1.5" fill="none" stroke="#f0f0f0" stroke-width="2"/></svg>
<div class="t" style="left:627px;top:483.5px;color:#d2d2d2">Show HeightMesh</div>
<div class="chk" style="left:830px;top:485px;width:17px;height:17px;background:#2c2c2c;border-color:#232323"></div>
<div class="t" style="left:627px;top:534.5px;color:#d2d2d2">Show Path Polygons</div>
<div class="chk" style="left:830px;top:536px;width:17px;height:17px;background:#2c2c2c;border-color:#232323"></div>
<svg style="left:833px;top:539px" width="12" height="11" viewBox="0 0 12 11"><path d="M1.5 5.5 L4.5 8.7 L10.5 1.5" fill="none" stroke="#f0f0f0" stroke-width="2"/></svg>
<div class="t" style="left:627px;top:554.5px;color:#d2d2d2">Show Path Query Nodes</div>
<div class="chk" style="left:830px;top:556px;width:17px;height:17px;background:#2c2c2c;border-color:#232323"></div>
<div class="t" style="left:627px;top:574.5px;color:#d2d2d2">Show Neighbours</div>
<div class="chk" style="left:830px;top:576px;width:17px;height:17px;background:#2c2c2c;border-color:#232323"></div>
<div class="t" style="left:627px;top:594.5px;color:#d2d2d2">Show Walls</div>
<div class="chk" style="left:830px;top:596px;width:17px;height:17px;background:#2c2c2c;border-color:#232323"></div>
<div class="t" style="left:627px;top:614.5px;color:#d2d2d2">Show Avoidance</div>
<div class="chk" style="left:830px;top:616px;width:17px;height:17px;background:#2c2c2c;border-color:#232323"></div>
<div class="t" style="left:627px;top:665.5px;color:#d2d2d2">Show Carve Hull</div>
<div class="chk" style="left:830px;top:667px;width:17px;height:17px;background:#2c2c2c;border-color:#232323"></div>
<!--END:SCENE-->
<!--SECTION:HIER--><div class="tab" style="left:860px;top:99px;width:137px;height:30px"></div>
<svg style="left:872px;top:109px" width="15" height="12" viewBox="0 0 15 12"><g fill="#c4c4c4"><rect x="0" y="0" width="2" height="2"/><rect x="4" y="0.3" width="11" height="1.4"/><rect x="3" y="5" width="2" height="2"/><rect x="7" y="5.3" width="8" height="1.4"/><rect x="3" y="10" width="2" height="2"/><rect x="7" y="10.3" width="8" height="1.4"/></g></svg>
<div class="t" style="left:892px;top:106px">Hierarchy</div>
<svg style="left:1391.5px;top:108px" width="11" height="12" viewBox="0 0 11 12"><rect x="0.7" y="6.2" width="9.6" height="5.1" rx="0.8" fill="none" stroke="#d0d0d0" stroke-width="1.3"/><path d="M3.2 3.6 V3.2 a2.3 2.3 0 0 1 4.6 0 V6" fill="none" stroke="#d0d0d0" stroke-width="1.3"/></svg>
<svg style="left:1417px;top:108.2px" width="4" height="13" viewBox="0 0 4 13"><g fill="#d0d0d0"><circle cx="2" cy="1.8" r="1.35"/><circle cx="2" cy="6.2" r="1.35"/><circle cx="2" cy="10.6" r="1.35"/></g></svg>
<div class="a" style="left:860px;top:129px;width:577px;height:568px;background:#383838"></div>
<div class="a" style="left:860px;top:129px;width:577px;height:25px;background:#3c3c3c;border-bottom:1px solid #2c2c2c"></div>
<div class="a" style="left:860px;top:154px;width:40px;height:543px;background:#333"></div>
<svg style="left:867px;top:133px" width="32" height="17" viewBox="0 0 32 17"><path d="M8.5 0.5 V16.5 M0.5 8.5 H16.5" stroke="#d0d0d0" stroke-width="1.6"/><path d="M21 6 H30 L25.5 11 Z" fill="#c4c4c4"/></svg>
<div class="inp" style="left:1025px;top:132px;width:407px;height:20px;border-color:#1f1f1f"></div>
<div class="a" style="left:1410px;top:133px;width:21px;height:18px;background:#414141;border-radius:0 2px 2px 0"></div>
<svg style="left:1414px;top:135px" width="14" height="14" viewBox="0 0 14 14"><g fill="none" stroke="#bdbdbd" stroke-width="1.2"><path d="M3.5 4 V1 H13 V10.5 H10"/><rect x="1" y="7.5" width="5.5" height="5.5"/><path d="M6 8 L10.5 3.5 M7 3.5 H10.5 V7"/></g></svg>
<svg style="left:1031px;top:137px" width="13" height="11" viewBox="0 0 13 11"><circle cx="4" cy="4" r="2.7" fill="none" stroke="#b0b0b0" stroke-width="1.4"/><path d="M6 6 L9 9.5" stroke="#b0b0b0" stroke-width="1.6"/><path d="M9 3.5 H13 L11 6 Z" fill="#b0b0b0"/></svg>
<div class="t" style="left:1049px;top:132px;color:#6e6e6e;font-size:15px">All</div>
<div class="a" style="left:860px;top:154px;width:577px;height:20px;background:#2d2d2d"></div>
<svg style="left:902px;top:160px" width="11" height="10" viewBox="0 0 11 10"><path d="M0 0 H11 L5.5 10 Z" fill="#6a6a6a"/></svg>
<svg style="left:919px;top:155px" width="16" height="18" viewBox="0 0 16 18"><path d="M8 0.5 L15.5 4.8 V13.2 L8 17.5 L0.5 13.2 V4.8 Z" fill="#ececec"/><g fill="#2d2d2d"><path d="M8 3.4 L11.4 5.3 L8 7.2 L4.6 5.3 Z"/><path d="M2.6 7 L6.9 9.4 V14.4 L2.6 12 Z"/><path d="M13.4 7 L9.1 9.4 V14.4 L13.4 12 Z"/><path d="M7.2 0 H8.8 V2.6 H7.2 Z"/><path d="M0 13 L2.2 11.7 L3 13 L0.8 14.3 Z"/><path d="M16 13 L13.8 11.7 L13 13 L15.2 14.3 Z"/></g></svg>
<div class="t" style="left:941px;top:154px;font-weight:bold;color:#e4e4e4;font-size:16px;letter-spacing:-.15px">HomeScreen*</div>
<svg style="left:1418px;top:158.2px" width="4" height="13" viewBox="0 0 4 13"><g fill="#d0d0d0"><circle cx="2" cy="1.8" r="1.35"/><circle cx="2" cy="6.2" r="1.35"/><circle cx="2" cy="10.6" r="1.35"/></g></svg>
<svg style="left:935px;top:176px" width="17" height="18" viewBox="0 0 17 18"><g fill="none" stroke="#c0c0c0" stroke-width="1.3" stroke-linejoin="round"><path d="M8.5 1 L16 4.8 V13.2 L8.5 17 L1 13.2 V4.8 Z"/><path d="M1 4.8 L8.5 8.6 L16 4.8 M8.5 8.6 V17"/></g></svg>
<div class="t" style="left:957px;top:175px">Main Camera</div>
<svg style="left:935px;top:196px" width="17" height="18" viewBox="0 0 17 18"><g fill="none" stroke="#c0c0c0" stroke-width="1.3" stroke-linejoin="round"><path d="M8.5 1 L16 4.8 V13.2 L8.5 17 L1 13.2 V4.8 Z"/><path d="M1 4.8 L8.5 8.6 L16 4.8 M8.5 8.6 V17"/></g></svg>
<div class="t" style="left:957px;top:195px">Directional Light</div>
<svg style="left:935px;top:216px" width="17" height="18" viewBox="0 0 17 18"><g fill="none" stroke="#c0c0c0" stroke-width="1.3" stroke-linejoin="round"><path d="M8.5 1 L16 4.8 V13.2 L8.5 17 L1 13.2 V4.8 Z"/><path d="M1 4.8 L8.5 8.6 L16 4.8 M8.5 8.6 V17"/></g></svg>
<div class="t" style="left:957px;top:215px">Canvas</div>
<svg style="left:920px;top:220px" width="11" height="10" viewBox="0 0 11 10"><path d="M0 0 H11 L5.5 10 Z" fill="#6a6a6a"/></svg>
<svg style="left:953px;top:236px" width="17" height="18" viewBox="0 0 17 18"><g fill="none" stroke="#c0c0c0" stroke-width="1.3" stroke-linejoin="round"><path d="M8.5 1 L16 4.8 V13.2 L8.5 17 L1 13.2 V4.8 Z"/><path d="M1 4.8 L8.5 8.6 L16 4.8 M8.5 8.6 V17"/></g></svg>
<div class="t" style="left:975px;top:235px">Background</div>
<svg style="left:953px;top:256px" width="17" height="18" viewBox="0 0 17 18"><g fill="none" stroke="#c0c0c0" stroke-width="1.3" stroke-linejoin="round"><path d="M8.5 1 L16 4.8 V13.2 L8.5 17 L1 13.2 V4.8 Z"/><path d="M1 4.8 L8.5 8.6 L16 4.8 M8.5 8.6 V17"/></g></svg>
<div class="t" style="left:975px;top:255px">Portada</div>
<svg style="left:953px;top:276px" width="17" height="18" viewBox="0 0 17 18"><g fill="none" stroke="#c0c0c0" stroke-width="1.3" stroke-linejoin="round"><path d="M8.5 1 L16 4.8 V13.2 L8.5 17 L1 13.2 V4.8 Z"/><path d="M1 4.8 L8.5 8.6 L16 4.8 M8.5 8.6 V17"/></g></svg>
<div class="t" style="left:975px;top:275px">Button</div>
<svg style="left:937px;top:280px" width="11" height="10" viewBox="0 0 11 10"><path d="M0 0 H11 L5.5 10 Z" fill="#6a6a6a"/></svg>
<div class="a" style="left:860px;top:295px;width:577px;height:20px;background:#4d4d4d"></div>
<svg style="left:971px;top:296px" width="17" height="18" viewBox="0 0 17 18"><g fill="none" stroke="#c0c0c0" stroke-width="1.3" stroke-linejoin="round"><path d="M8.5 1 L16 4.8 V13.2 L8.5 17 L1 13.2 V4.8 Z"/><path d="M1 4.8 L8.5 8.6 L16 4.8 M8.5 8.6 V17"/></g></svg>
<div class="t" style="left:992px;top:295px">Earth</div>
<svg style="left:935px;top:316px" width="17" height="18" viewBox="0 0 17 18"><g fill="none" stroke="#c0c0c0" stroke-width="1.3" stroke-linejoin="round"><path d="M8.5 1 L16 4.8 V13.2 L8.5 17 L1 13.2 V4.8 Z"/><path d="M1 4.8 L8.5 8.6 L16 4.8 M8.5 8.6 V17"/></g></svg>
<div class="t" style="left:957px;top:315px">EventSystem</div>
<!--END:HIER-->
<!--SECTION:INSP--><div class="a" style="left:1439px;top:129px;width:480px;height:983px;background:#383838"></div>
<div class="t" style="left:1462px;top:126px">Maskable</div>
<div class="chk" style="left:1630px;top:127px;width:17px;height:17px"></div><svg style="left:1633px;top:130px" width="12" height="11" viewBox="0 0 12 11"><path d="M1.5 5.5 L4.5 8.7 L10.5 1.5" fill="none" stroke="#f0f0f0" stroke-width="2"/></svg>
<div class="t" style="left:1462px;top:151px">Image Type</div>
<div class="a" style="left:1631px;top:150px;width:266px;height:21px;background:#515151;border-radius:3px;border:1px solid #303030"></div><div class="t" style="left:1635px;top:150px;color:#d2d2d2">Simple</div><svg style="left:1880px;top:158px" width="11" height="6" viewBox="0 0 11 6"><path d="M0 0 H11 L5.5 6 Z" fill="#c4c4c4"/></svg>
<div class="t" style="left:1480px;top:176px">Use Sprite Mesh</div>
<div class="chk" style="left:1630px;top:177px;width:17px;height:17px"></div>
<div class="t" style="left:1480px;top:201px">Preserve Aspect</div>
<div class="chk" style="left:1630px;top:202px;width:17px;height:17px"></div>
<div class="a" style="left:1629px;top:225px;width:269px;height:21px;background:#585858;border-radius:3px;border:1px solid #303030"></div><div class="t" style="left:1629px;top:225px;width:269px;text-align:center;color:#e0e0e0">Set Native Size</div>
<div class="a" style="left:1439px;top:258px;width:466px;height:1px;background:#1a1a1a"></div>
<div class="a" style="left:1439px;top:259px;width:466px;height:27px;background:#3e3e3e"></div>
<svg style="left:1446px;top:268px" width="11" height="10" viewBox="0 0 11 10"><path d="M0 0 H11 L5.5 10 Z" fill="#6a6a6a"/></svg>
<svg style="left:1465px;top:265px" width="16" height="16" viewBox="0 0 16 16"><circle cx="8" cy="8" r="7" fill="none" stroke="#9a9a9a" stroke-width="1.3"/><circle cx="8" cy="8" r="4.8" fill="#b8b8b8"/></svg>
<div class="chk" style="left:1488px;top:264px;width:17px;height:17px"></div><svg style="left:1491px;top:267px" width="12" height="11" viewBox="0 0 12 11"><path d="M1.5 5.5 L4.5 8.7 L10.5 1.5" fill="none" stroke="#f0f0f0" stroke-width="2"/></svg>
<div class="t" style="left:1513px;top:263px;font-weight:bold;color:#dedede;font-size:15.5px">Button</div>
<svg style="left:1831px;top:266px" width="14" height="14" viewBox="0 0 14 14"><circle cx="7" cy="7" r="6.5" fill="#d0d0d0"/><path d="M4.8 5.5 a2.3 2.2 0 1 1 3.4 1.9 q-1 .6 -1 1.6" fill="none" stroke="#3e3e3e" stroke-width="1.6"/><circle cx="7.1" cy="11" r="1" fill="#3e3e3e"/></svg>
<svg style="left:1856px;top:266px" width="14" height="14" viewBox="0 0 14 14"><g stroke="#d0d0d0" stroke-width="1.5"><path d="M0 4 H14 M0 10 H14"/><path d="M9.5 0.5 V7.5 M4.5 6.5 V13.5" stroke-width="2"/></g></svg>
<svg style="left:1886px;top:266.2px" width="4" height="13" viewBox="0 0 4 13"><g fill="#d0d0d0"><circle cx="2" cy="1.8" r="1.35"/><circle cx="2" cy="6.2" r="1.35"/><circle cx="2" cy="10.6" r="1.35"/></g></svg>
<div class="t" style="left:1462px;top:293px">Interactable</div>
<div class="chk" style="left:1630px;top:294px;width:17px;height:17px"></div><svg style="left:1633px;top:297px" width="12" height="11" viewBox="0 0 12 11"><path d="M1.5 5.5 L4.5 8.7 L10.5 1.5" fill="none" stroke="#f0f0f0" stroke-width="2"/></svg>
<div class="t" style="left:1462px;top:318px">Transition</div>
<div class="a" style="left:1631px;top:317px;width:266px;height:21px;background:#515151;border-radius:3px;border:1px solid #303030"></div><div class="t" style="left:1635px;top:317px;color:#d2d2d2">Color Tint</div><svg style="left:1880px;top:325px" width="11" height="6" viewBox="0 0 11 6"><path d="M0 0 H11 L5.5 6 Z" fill="#c4c4c4"/></svg>
<div class="t" style="left:1480px;top:343px">Target Graphic</div>
<div class="inp" style="left:1631px;top:342px;width:266px;height:21px"></div>
<div class="a" style="left:1875px;top:343px;width:21px;height:19px;background:#383838;border-radius:0 2px 2px 0"></div>
<svg style="left:1879px;top:346px" width="14" height="14" viewBox="0 0 14 14"><circle cx="7" cy="7" r="5.8" fill="none" stroke="#c4c4c4" stroke-width="1.3"/><circle cx="7" cy="7" r="1.8" fill="#c4c4c4"/></svg>
<svg style="left:1635px;top:347px" width="14" height="12" viewBox="0 0 14 12"><rect x="1.5" y="1.5" width="11" height="9" fill="none" stroke="#d0d0d0" stroke-width="1.3"/><path d="M2 9.5 L5.5 5.5 L8 8 L9.5 6.5 L12 9.5 Z" fill="#d0d0d0"/><rect x="0" y="0" width="3" height="3" fill="#d0d0d0"/><rect x="11" y="0" width="3" height="3" fill="#d0d0d0"/><rect x="0" y="9" width="3" height="3" fill="#d0d0d0"/><rect x="11" y="9" width="3" height="3" fill="#d0d0d0"/></svg>
<div class="t" style="left:1650px;top:343px;color:#d2d2d2">Earth (Image)</div>
<div class="t" style="left:1480px;top:368px">Normal Color</div>
<div class="a" style="left:1630px;top:366px;width:268px;height:22px;background:#242424;border-radius:3px"></div>
<div class="a" style="left:1632px;top:367px;width:243px;height:17px;background:#ffffff"></div>
<div class="a" style="left:1632px;top:384px;width:243px;height:3px;background:#fff"></div>
<div class="a" style="left:1876px;top:367px;width:21px;height:20px;background:#3a3a3a;border-radius:0 2px 2px 0"></div>
<svg style="left:1880px;top:370px" width="14" height="14" viewBox="0 0 14 14"><path d="M1 13 L2 10 L8 4 L10 6 L4 12 Z" fill="none" stroke="#c8c8c8" stroke-width="1.2"/><path d="M7.5 3 L9.5 1 Q11.5 -0.5 13 1 Q14.5 2.5 13 4.5 L11 6.5 L12 7.5 L11 8.5 L5.5 3 L6.5 2 Z" fill="#c8c8c8"/></svg>
<div class="t" style="left:1480px;top:393px">Highlighted Color</div>
<div class="a" style="left:1630px;top:391px;width:268px;height:22px;background:#242424;border-radius:3px"></div>
<div class="a" style="left:1632px;top:392px;width:243px;height:17px;background:#f5f5f5"></div>
<div class="a" style="left:1632px;top:409px;width:243px;height:3px;background:#fff"></div>
<div class="a" style="left:1876px;top:392px;width:21px;height:20px;background:#3a3a3a;border-radius:0 2px 2px 0"></div>
<svg style="left:1880px;top:395px" width="14" height="14" viewBox="0 0 14 14"><path d="M1 13 L2 10 L8 4 L10 6 L4 12 Z" fill="none" stroke="#c8c8c8" stroke-width="1.2"/><path d="M7.5 3 L9.5 1 Q11.5 -0.5 13 1 Q14.5 2.5 13 4.5 L11 6.5 L12 7.5 L11 8.5 L5.5 3 L6.5 2 Z" fill="#c8c8c8"/></svg>
<div class="t" style="left:1480px;top:418px">Pressed Color</div>
<div class="a" style="left:1630px;top:416px;width:268px;height:22px;background:#242424;border-radius:3px"></div>
<div class="a" style="left:1632px;top:417px;width:243px;height:17px;background:#c8c8c8"></div>
<div class="a" style="left:1632px;top:434px;width:243px;height:3px;background:#fff"></div>
<div class="a" style="left:1876px;top:417px;width:21px;height:20px;background:#3a3a3a;border-radius:0 2px 2px 0"></div>
<svg style="left:1880px;top:420px" width="14" height="14" viewBox="0 0 14 14"><path d="M1 13 L2 10 L8 4 L10 6 L4 12 Z" fill="none" stroke="#c8c8c8" stroke-width="1.2"/><path d="M7.5 3 L9.5 1 Q11.5 -0.5 13 1 Q14.5 2.5 13 4.5 L11 6.5 L12 7.5 L11 8.5 L5.5 3 L6.5 2 Z" fill="#c8c8c8"/></svg>
<div class="t" style="left:1480px;top:443px">Selected Color</div>
<div class="a" style="left:1630px;top:441px;width:268px;height:22px;background:#242424;border-radius:3px"></div>
<div class="a" style="left:1632px;top:442px;width:243px;height:17px;background:#f5f5f5"></div>
<div class="a" style="left:1632px;top:459px;width:243px;height:3px;background:#fff"></div>
<div class="a" style="left:1876px;top:442px;width:21px;height:20px;background:#3a3a3a;border-radius:0 2px 2px 0"></div>
<svg style="left:1880px;top:445px" width="14" height="14" viewBox="0 0 14 14"><path d="M1 13 L2 10 L8 4 L10 6 L4 12 Z" fill="none" stroke="#c8c8c8" stroke-width="1.2"/><path d="M7.5 3 L9.5 1 Q11.5 -0.5 13 1 Q14.5 2.5 13 4.5 L11 6.5 L12 7.5 L11 8.5 L5.5 3 L6.5 2 Z" fill="#c8c8c8"/></svg>
<div class="t" style="left:1480px;top:468px">Disabled Color</div>
<div class="a" style="left:1630px;top:466px;width:268px;height:22px;background:#242424;border-radius:3px"></div>
<div class="a" style="left:1632px;top:467px;width:243px;height:17px;background:#c8c8c8"></div>
<div class="a" style="left:1632px;top:484px;width:122px;height:3px;background:#fff"></div><div class="a" style="left:1754px;top:484px;width:121px;height:3px;background:#000"></div>
<div class="a" style="left:1876px;top:467px;width:21px;height:20px;background:#3a3a3a;border-radius:0 2px 2px 0"></div>
<svg style="left:1880px;top:470px" width="14" height="14" viewBox="0 0 14 14"><path d="M1 13 L2 10 L8 4 L10 6 L4 12 Z" fill="none" stroke="#c8c8c8" stroke-width="1.2"/><path d="M7.5 3 L9.5 1 Q11.5 -0.5 13 1 Q14.5 2.5 13 4.5 L11 6.5 L12 7.5 L11 8.5 L5.5 3 L6.5 2 Z" fill="#c8c8c8"/></svg>
<div class="t" style="left:1480px;top:493px">Color Multiplier</div>
<div class="a" style="left:1634px;top:501px;width:196px;height:2px;background:#5e5e5e"></div>
<div class="a" style="left:1630px;top:496px;width:13px;height:13px;background:#999;border-radius:50%"></div>
<div class="inp" style="left:1836px;top:492px;width:61px;height:21px"></div><div class="t" style="left:1841px;top:493px;color:#d2d2d2">1</div>
<div class="t" style="left:1480px;top:518px">Fade Duration</div>
<div class="inp" style="left:1631px;top:517px;width:266px;height:21px"></div><div class="t" style="left:1634px;top:518px;color:#d2d2d2">0.1</div>
<div class="t" style="left:1462px;top:553px">Navigation</div>
<div class="a" style="left:1631px;top:552px;width:266px;height:21px;background:#515151;border-radius:3px;border:1px solid #303030"></div><div class="t" style="left:1635px;top:552px;color:#d2d2d2">Automatic</div><svg style="left:1880px;top:560px" width="11" height="6" viewBox="0 0 11 6"><path d="M0 0 H11 L5.5 6 Z" fill="#c4c4c4"/></svg>
<div class="a" style="left:1629px;top:580px;width:269px;height:21px;background:#585858;border-radius:3px;border:1px solid #303030"></div><div class="t" style="left:1629px;top:580px;width:269px;text-align:center;color:#e0e0e0">Visualize</div>
<div class="a" style="left:1460px;top:614px;width:438px;height:95px;background:#414141;border:1px solid #242424;border-radius:3px"></div>
<div class="a" style="left:1461px;top:615px;width:436px;height:24px;background:#353535;border-bottom:1px solid #242424"></div>
<div class="t" style="left:1470px;top:616px">On Click ()</div>
<div class="a" style="left:1468px;top:656px;width:12px;height:1px;background:#6a6a6a"></div><div class="a" style="left:1468px;top:660px;width:12px;height:1px;background:#6a6a6a"></div>
<div class="a" style="left:1487px;top:648px;width:121px;height:21px;background:#515151;border-radius:3px;border:1px solid #303030"></div><div class="t" style="left:1491px;top:648px;color:#d2d2d2">Runtime Only</div><svg style="left:1591px;top:656px" width="11" height="6" viewBox="0 0 11 6"><path d="M0 0 H11 L5.5 6 Z" fill="#c4c4c4"/></svg>
<div class="a" style="left:1615px;top:648px;width:275px;height:21px;background:#515151;border-radius:3px;border:1px solid #303030"></div><div class="t" style="left:1619px;top:648px;color:#d2d2d2">No Function</div><svg style="left:1873px;top:656px" width="11" height="6" viewBox="0 0 11 6"><path d="M0 0 H11 L5.5 6 Z" fill="#c4c4c4"/></svg>
<div class="a" style="left:1487px;top:672px;width:121px;height:23px;background:#2a2a2a;border:1px solid #3a79bb;border-radius:3px"></div>
<div class="a" style="left:1584px;top:673px;width:23px;height:21px;background:#383838;border-radius:0 2px 2px 0"></div>
<svg style="left:1589px;top:677px" width="14" height="14" viewBox="0 0 14 14"><circle cx="7" cy="7" r="5.8" fill="none" stroke="#c4c4c4" stroke-width="1.3"/><circle cx="7" cy="7" r="1.8" fill="#c4c4c4"/></svg>
<svg style="left:1490px;top:676px" width="14" height="15" viewBox="0 0 17 18"><g fill="none" stroke="#c0c0c0" stroke-width="1.5" stroke-linejoin="round"><path d="M8.5 1 L16 4.8 V13.2 L8.5 17 L1 13.2 V4.8 Z"/><path d="M1 4.8 L8.5 8.6 L16 4.8 M8.5 8.6 V17"/></g></svg>
<div class="t" style="left:1506px;top:674px;color:#d2d2d2">Button</div>
<div class="a" style="left:1822px;top:708px;width:63px;height:25px;background:#414141;border:1px solid #242424;border-top:none;border-radius:0 0 3px 3px"></div>
<svg style="left:1827px;top:714px" width="14" height="13" viewBox="0 0 14 13"><path d="M7 0.5 V12.5 M1 6.5 H13" stroke="#c4c4c4" stroke-width="1.5"/></svg>
<svg style="left:1859px;top:714px" width="12" height="13" viewBox="0 0 12 13"><path d="M1 6.5 H11" stroke="#c4c4c4" stroke-width="1.5"/></svg>
<div class="a" style="left:1439px;top:745px;width:466px;height:1px;background:#1a1a1a"></div>
<div class="a" style="left:1458px;top:754px;width:40px;height:40px;background:#414141"></div>
<div class="t" style="left:1507px;top:755px;color:#6e6e6e;font-size:17px;letter-spacing:1px">Default UI Material</div>
<svg style="left:1867px;top:755px" width="14" height="14" viewBox="0 0 14 14"><circle cx="7" cy="7" r="6.5" fill="#d0d0d0"/><path d="M4.8 5.5 a2.3 2.2 0 1 1 3.4 1.9 q-1 .6 -1 1.6" fill="none" stroke="#3e3e3e" stroke-width="1.6"/><circle cx="7.1" cy="11" r="1" fill="#3e3e3e"/></svg>
<svg style="left:1892px;top:755.2px" width="4" height="13" viewBox="0 0 4 13"><g fill="#d0d0d0"><circle cx="2" cy="1.8" r="1.35"/><circle cx="2" cy="6.2" r="1.35"/><circle cx="2" cy="10.6" r="1.35"/></g></svg>
<div class="a" style="left:1560px;top:782px;width:218px;height:21px;background:#474747;border-radius:3px;border:1px solid #303030"></div><div class="t" style="left:1595px;top:782px;color:#6e6e6e">Default</div>
<svg style="left:1760px;top:790px" width="11" height="6" viewBox="0 0 11 6"><path d="M0 0 H11 L5.5 6 Z" fill="#6e6e6e"/></svg>
<div class="a" style="left:1784px;top:782px;width:55px;height:21px;background:#585858;border-radius:3px;border:1px solid #303030"></div><div class="t" style="left:1784px;top:782px;width:55px;text-align:center;color:#d6d6d6">Edit...</div>
<div class="a" style="left:1845px;top:782px;width:53px;height:21px;background:#585858;border-radius:3px;border:1px solid #303030"></div>
<svg style="left:1855px;top:787px" width="14" height="11" viewBox="0 0 15 12"><g fill="#c4c4c4"><rect x="0" y="0" width="2" height="2"/><rect x="4" y="0.3" width="11" height="1.4"/><rect x="3" y="5" width="2" height="2"/><rect x="7" y="5.3" width="8" height="1.4"/><rect x="3" y="10" width="2" height="2"/><rect x="7" y="10.3" width="8" height="1.4"/></g></svg>
<svg style="left:1880px;top:790px" width="11" height="6" viewBox="0 0 11 6"><path d="M0 0 H11 L5.5 6 Z" fill="#c4c4c4"/></svg>
<div class="a" style="left:1439px;top:813px;width:466px;height:1px;background:#1a1a1a"></div>
<div class="a" style="left:1439px;top:814px;width:466px;height:15px;background:#393939"></div>
<div class="a" style="left:1439px;top:829px;width:466px;height:1px;background:#1f1f1f"></div>
<div class="a" style="left:1532px;top:841px;width:281px;height:28px;background:#585858;border-radius:3px;border:1px solid #303030"></div><div class="t" style="left:1532px;top:845px;width:281px;text-align:right;padding-right:85px;color:#e0e0e0">Add Component</div>
<div class="a" style="left:1905px;top:129px;width:14px;height:756px;background:#353535"></div>
<svg style="left:1907px;top:135px" width="10" height="6" viewBox="0 0 10 6"><path d="M0 6 H10 L5 0 Z" fill="#b0b0b0"/></svg>
<svg style="left:1907px;top:873px" width="10" height="6" viewBox="0 0 10 6"><path d="M0 0 H10 L5 6 Z" fill="#b0b0b0"/></svg>
<div class="a" style="left:1906px;top:452px;width:13px;height:412px;background:#5f5f5f;border-radius:6px"></div>
<div class="a" style="left:1439px;top:885px;width:480px;height:1px;background:#1f1f1f"></div>
<div class="a" style="left:1439px;top:886px;width:480px;height:26px;background:#373737"></div>
<div class="a" style="left:1439px;top:897px;width:458px;height:1px;background:#505050"></div><div class="a" style="left:1439px;top:901px;width:458px;height:1px;background:#505050"></div>
<div class="a" style="left:1899px;top:886px;width:1px;height:26px;background:#242424"></div>
<svg style="left:1909px;top:892.6px" width="4" height="13" viewBox="0 0 4 13"><g fill="#d0d0d0"><circle cx="2" cy="1.8" r="1.35"/><circle cx="2" cy="6.2" r="1.35"/><circle cx="2" cy="10.6" r="1.35"/></g></svg>
<div class="a" style="left:1439px;top:912px;width:480px;height:200px;background:#2d2d2d"></div>
<svg style="left:1488px;top:913px" width="383" height="190"><use href="#earth" width="383" height="190"/></svg>
<div class="t" style="left:1579px;top:1061px;width:200px;text-align:center;color:#e6e6e6;font-size:15px;font-weight:bold;text-shadow:1px 1px 1px #000,0 0 2px #000,1px 2px 2px #000">Earth</div>
<div class="t" style="left:1579px;top:1080px;width:200px;text-align:center;color:#e6e6e6;font-size:15px;font-weight:bold;text-shadow:1px 1px 1px #000,0 0 2px #000,1px 2px 2px #000;letter-spacing:.45px">Image Size: 2048x1024</div>
<div class="tab" style="left:1439px;top:99px;width:134px;height:30px;border-top:2px solid #3a79bb;border-radius:3px 3px 0 0"></div>
<svg style="left:1452px;top:109px" width="13" height="13" viewBox="0 0 13 13"><circle cx="6.5" cy="6.5" r="6.5" fill="#d6d6d6"/><rect x="5.5" y="5.3" width="2" height="5" fill="#3c3c3c"/><circle cx="6.5" cy="3.3" r="1.1" fill="#3c3c3c"/></svg>
<div class="t" style="left:1470px;top:106px">Inspector</div>
<svg style="left:1875.5px;top:108px" width="11" height="12" viewBox="0 0 11 12"><rect x="0.7" y="6.2" width="9.6" height="5.1" rx="0.8" fill="none" stroke="#d0d0d0" stroke-width="1.3"/><path d="M3.2 3.6 V3.2 a2.3 2.3 0 0 1 4.6 0 V6" fill="none" stroke="#d0d0d0" stroke-width="1.3"/></svg>
<svg style="left:1900px;top:108.2px" width="4" height="13" viewBox="0 0 4 13"><g fill="#d0d0d0"><circle cx="2" cy="1.8" r="1.35"/><circle cx="2" cy="6.2" r="1.35"/><circle cx="2" cy="10.6" r="1.35"/></g></svg>
<div class="a" style="left:1573px;top:99px;width:290px;height:30px;background:#151515"></div>
<div class="a" style="left:1439px;top:1105px;width:480px;height:8px;background:#3c3c3c"></div>
<!--END:INSP-->
<!--SECTION:GAME--><div class="a" style="left:0;top:698px;width:1437px;height:5px;background:#151515"></div>
<div class="a" style="left:0;top:703px;width:657px;height:27px;background:#151515"></div>
<svg style="left:13px;top:709px" width="13" height="13" viewBox="0 0 13 13"><rect x=".7" y=".7" width="11.6" height="11.6" fill="none" stroke="#c4c4c4" stroke-width="1.4"/><path d="M1 4.3 H12 M1 7 H12 M1 9.7 H12" stroke="#c4c4c4" stroke-width="1.3"/></svg>
<div class="t" style="left:31px;top:707px">Console</div>
<div class="tab" style="left:125px;top:700px;width:110px;height:30px"></div>
<svg style="left:135px;top:711px" width="19" height="11" viewBox="0 0 19 11"><rect x="0.5" y="0.5" width="18" height="10" rx="5" fill="#c4c4c4"/><path d="M5.5 3 V8 M3 5.5 H8" stroke="#3c3c3c" stroke-width="1.5"/><circle cx="12.5" cy="6.7" r="1.1" fill="#3c3c3c"/><circle cx="15" cy="4.3" r="1.1" fill="#3c3c3c"/></svg>
<div class="t" style="left:157px;top:707px">Game</div>
<svg style="left:638px;top:708.2px" width="4" height="13" viewBox="0 0 4 13"><g fill="#d0d0d0"><circle cx="2" cy="1.8" r="1.35"/><circle cx="2" cy="6.2" r="1.35"/><circle cx="2" cy="10.6" r="1.35"/></g></svg>
<div class="a" style="left:0;top:730px;width:657px;height:26px;background:#3c3c3c;border-bottom:1px solid #232323;overflow:hidden"><div class="t" style="left:576px;top:4px">Play Focused</div></div>
<div class="a" style="left:113px;top:730px;width:1px;height:25px;background:#2a2a2a"></div>
<div class="a" style="left:220px;top:730px;width:1px;height:25px;background:#2a2a2a"></div>
<div class="a" style="left:420px;top:730px;width:1px;height:25px;background:#2a2a2a"></div>
<div class="a" style="left:571px;top:730px;width:1px;height:25px;background:#2a2a2a"></div>
<div class="t" style="left:5px;top:734px">Game</div><svg style="left:97px;top:740px" width="10" height="6" viewBox="0 0 10 6"><path d="M0 0 H10 L5 6 Z" fill="#c4c4c4"/></svg>
<div class="t" style="left:125px;top:734px">Display 1</div><svg style="left:204px;top:740px" width="10" height="6" viewBox="0 0 10 6"><path d="M0 0 H10 L5 6 Z" fill="#c4c4c4"/></svg>
<div class="t" style="left:225px;top:734px">2160x1080 Portrait</div><svg style="left:404px;top:740px" width="10" height="6" viewBox="0 0 10 6"><path d="M0 0 H10 L5 6 Z" fill="#c4c4c4"/></svg>
<div class="t" style="left:429px;top:734px">Scale</div>
<div class="a" style="left:480px;top:742px;width:32px;height:3px;background:#5a5a5a"></div><div class="a" style="left:475px;top:738px;width:12px;height:12px;border-radius:50%;background:#9c9c9c"></div>
<div class="t" style="left:520px;top:734px">0.16x</div>
<div class="a" style="left:0;top:756px;width:657px;height:356px;background:#252525"></div>
<svg style="left:239px;top:757px" width="178" height="355"><rect width="178" height="355" filter="url(#stone2)"/></svg>
<div class="t" style="left:267px;top:778px;height:30px;line-height:30px;font-size:22px;color:#ef8d10">Planetes AR</div>
<svg style="left:272px;top:835px" width="46" height="44"><use href="#earth" width="46" height="44"/></svg>
<!--END:GAME-->
<!--SECTION:PROJ--><div class="a" style="left:659px;top:703px;width:778px;height:27px;background:#151515"></div>
<div class="tab" style="left:659px;top:700px;width:119px;height:30px"></div>
<svg style="left:671px;top:709px" width="16" height="13" viewBox="0 0 16 13"><path d="M0.5 1.5 a1 1 0 0 1 1 -1 H6 L7.5 2.5 H14.5 a1 1 0 0 1 1 1 V11.5 a1 1 0 0 1 -1 1 H1.5 a1 1 0 0 1 -1 -1 Z" fill="#c2c2c2"/></svg>
<div class="t" style="left:691px;top:707px">Project</div>
<svg style="left:1391.5px;top:709px" width="11" height="12" viewBox="0 0 11 12"><rect x="0.7" y="6.2" width="9.6" height="5.1" rx="0.8" fill="none" stroke="#d0d0d0" stroke-width="1.3"/><path d="M3.2 3.6 V3.2 a2.3 2.3 0 0 1 4.6 0 V6" fill="none" stroke="#d0d0d0" stroke-width="1.3"/></svg>
<svg style="left:1417px;top:708.2px" width="4" height="13" viewBox="0 0 4 13"><g fill="#d0d0d0"><circle cx="2" cy="1.8" r="1.35"/><circle cx="2" cy="6.2" r="1.35"/><circle cx="2" cy="10.6" r="1.35"/></g></svg>
<div class="a" style="left:659px;top:730px;width:778px;height:26px;background:#3c3c3c;border-bottom:1px solid #232323"></div>
<svg style="left:667px;top:734px" width="32" height="17" viewBox="0 0 32 17"><path d="M8.5 0.5 V16.5 M0.5 8.5 H16.5" stroke="#d0d0d0" stroke-width="1.6"/><path d="M21 6 H30 L25.5 11 Z" fill="#c4c4c4"/></svg>
<div class="inp" style="left:855px;top:733px;width:396px;height:20px;border-color:#1f1f1f"></div>
<div class="a" style="left:1230px;top:734px;width:20px;height:18px;background:#414141;border-radius:0 2px 2px 0"></div>
<svg style="left:1233px;top:736px" width="14" height="14" viewBox="0 0 14 14"><g fill="none" stroke="#bdbdbd" stroke-width="1.2"><path d="M3.5 4 V1 H13 V10.5 H10"/><rect x="1" y="7.5" width="5.5" height="5.5"/><path d="M6 8 L10.5 3.5 M7 3.5 H10.5 V7"/></g></svg>
<svg style="left:860px;top:738px" width="11" height="11" viewBox="0 0 11 11"><circle cx="4" cy="4" r="2.7" fill="none" stroke="#b0b0b0" stroke-width="1.4"/><path d="M6 6 L9 9.5" stroke="#b0b0b0" stroke-width="1.6"/></svg>
<div class="a" style="left:1254px;top:730px;width:1px;height:25px;background:#2e2e2e"></div>
<div class="a" style="left:1286px;top:730px;width:1px;height:25px;background:#2e2e2e"></div>
<div class="a" style="left:1319px;top:730px;width:1px;height:25px;background:#2e2e2e"></div>
<div class="a" style="left:1351px;top:730px;width:1px;height:25px;background:#2e2e2e"></div>
<div class="a" style="left:1384px;top:730px;width:1px;height:25px;background:#2e2e2e"></div>
<svg style="left:1262px;top:734px" width="16" height="17" viewBox="0 0 16 17"><g fill="#c4c4c4"><rect x="2" y="0.5" width="7" height="6.5"/><circle cx="4.5" cy="12.5" r="4"/><path d="M11.5 4 L15.5 12 H8.5 Z"/></g></svg>
<svg style="left:1295px;top:736px" width="15" height="14" viewBox="0 0 15 14"><path d="M1 8 L8 1.5 L13.5 1 L14 6.5 L7 13.5 Z" fill="#c4c4c4"/><circle cx="11" cy="4" r="1.2" fill="#3c3c3c"/></svg>
<svg style="left:1325px;top:734px" width="18" height="18" viewBox="0 0 18 18"><path d="M5.5 0.5 H12.5 L17.5 5.5 V12.5 L12.5 17.5 H5.5 L0.5 12.5 V5.5 Z" fill="#e0e0e0"/><rect x="8" y="4" width="2.2" height="6.5" fill="#3c3c3c"/><circle cx="9.1" cy="13" r="1.3" fill="#3c3c3c"/></svg>
<svg style="left:1360px;top:735px" width="15" height="15" viewBox="0 0 15 15"><path d="M7.5 0.5 L9.6 5.3 L14.8 5.8 L10.9 9.3 L12 14.4 L7.5 11.7 L3 14.4 L4.1 9.3 L0.2 5.8 L5.4 5.3 Z" fill="#8e8e8e"/></svg>
<svg style="left:1391px;top:737px" width="19" height="12" viewBox="0 0 20 14"><path d="M1 7 Q10 -3 19 7 Q10 17 1 7 Z" fill="none" stroke="#666" stroke-width="1.5"/><circle cx="10" cy="6" r="3.3" fill="#666"/></svg>
<div class="t" style="left:1412px;top:734px;color:#8c8c8c">28</div>
<div class="a" style="left:659px;top:756px;width:260px;height:356px;background:#383838"></div>
<div class="a" style="left:919px;top:756px;width:1px;height:356px;background:#232323"></div>
<div class="a" style="left:920px;top:756px;width:517px;height:356px;background:#383838"></div>
<div class="a" style="left:920px;top:756px;width:517px;height:25px;background:#3c3c3c;border-bottom:1px solid #2c2c2c"></div>
<div class="a" style="left:920px;top:1086px;width:517px;height:26px;background:#3f3f3f;border-top:1px solid #2c2c2c"></div>
<div class="a" style="left:659px;top:833px;width:243px;height:20px;background:#4d4d4d"></div>
<div class="a" style="left:659px;top:756px;width:243px;height:356px;overflow:hidden">
<svg style="left:6px;top:22px" width="11" height="10" viewBox="0 0 11 10"><path d="M0 0 H11 L5.5 10 Z" fill="#6a6a6a"/></svg>
<svg style="left:22px;top:21px" width="18" height="13" viewBox="0 0 18 13"><path d="M0.5 1.5 a1 1 0 0 1 1 -1 H6 L7.5 2.5 H13.5 a1 1 0 0 1 1 1 V5 H4.5 L1.5 12 H0.5 Z" fill="#c2c2c2"/><path d="M5 6 H17.5 L14.5 12.5 H2 Z" fill="#c2c2c2"/></svg>
<div class="t" style="left:44px;top:17px;font-weight:bold;color:#dcdcdc;letter-spacing:-.2px">Assets</div>
<svg style="left:24px;top:41px" width="10" height="11" viewBox="0 0 10 11"><path d="M0 0 V11 L10 5.5 Z" fill="#6a6a6a"/></svg>
<svg style="left:40px;top:41px" width="16" height="13" viewBox="0 0 16 13"><path d="M0.5 1.5 a1 1 0 0 1 1 -1 H6 L7.5 2.5 H14.5 a1 1 0 0 1 1 1 V11.5 a1 1 0 0 1 -1 1 H1.5 a1 1 0 0 1 -1 -1 Z" fill="#c2c2c2"/></svg>
<div class="t" style="left:60px;top:37px">Planets of the Solar System</div>
<svg style="left:40px;top:61px" width="16" height="13" viewBox="0 0 16 13"><path d="M0.5 1.5 a1 1 0 0 1 1 -1 H6 L7.5 2.5 H14.5 a1 1 0 0 1 1 1 V11.5 a1 1 0 0 1 -1 1 H1.5 a1 1 0 0 1 -1 -1 Z" fill="#c2c2c2"/></svg>
<div class="t" style="left:60px;top:57px">Scenes</div>
<svg style="left:40px;top:81px" width="16" height="13" viewBox="0 0 16 13"><path d="M0.5 1.5 a1 1 0 0 1 1 -1 H6 L7.5 2.5 H14.5 a1 1 0 0 1 1 1 V11.5 a1 1 0 0 1 -1 1 H1.5 a1 1 0 0 1 -1 -1 Z" fill="#c2c2c2"/></svg>
<div class="t" style="left:60px;top:77px">Scripts</div>
<svg style="left:40px;top:101px" width="16" height="13" viewBox="0 0 16 13"><path d="M0.5 1.5 a1 1 0 0 1 1 -1 H6 L7.5 2.5 H14.5 a1 1 0 0 1 1 1 V11.5 a1 1 0 0 1 -1 1 H1.5 a1 1 0 0 1 -1 -1 Z" fill="#c2c2c2"/></svg>
<div class="t" style="left:60px;top:97px">Settings</div>
<svg style="left:24px;top:121px" width="10" height="11" viewBox="0 0 10 11"><path d="M0 0 V11 L10 5.5 Z" fill="#6a6a6a"/></svg>
<svg style="left:40px;top:121px" width="16" height="13" viewBox="0 0 16 13"><path d="M0.5 1.5 a1 1 0 0 1 1 -1 H6 L7.5 2.5 H14.5 a1 1 0 0 1 1 1 V11.5 a1 1 0 0 1 -1 1 H1.5 a1 1 0 0 1 -1 -1 Z" fill="#c2c2c2"/></svg>
<div class="t" style="left:60px;top:117px">TextMesh Pro</div>
<svg style="left:24px;top:141px" width="10" height="11" viewBox="0 0 10 11"><path d="M0 0 V11 L10 5.5 Z" fill="#6a6a6a"/></svg>
<svg style="left:40px;top:141px" width="16" height="13" viewBox="0 0 16 13"><path d="M0.5 1.5 a1 1 0 0 1 1 -1 H6 L7.5 2.5 H14.5 a1 1 0 0 1 1 1 V11.5 a1 1 0 0 1 -1 1 H1.5 a1 1 0 0 1 -1 -1 Z" fill="#c2c2c2"/></svg>
<div class="t" style="left:60px;top:137px">TutorialInfo</div>
<svg style="left:24px;top:161px" width="10" height="11" viewBox="0 0 10 11"><path d="M0 0 V11 L10 5.5 Z" fill="#6a6a6a"/></svg>
<svg style="left:40px;top:161px" width="16" height="13" viewBox="0 0 16 13"><path d="M0.5 1.5 a1 1 0 0 1 1 -1 H6 L7.5 2.5 H14.5 a1 1 0 0 1 1 1 V11.5 a1 1 0 0 1 -1 1 H1.5 a1 1 0 0 1 -1 -1 Z" fill="#c2c2c2"/></svg>
<div class="t" style="left:60px;top:157px">XR</div>
<svg style="left:6px;top:182px" width="11" height="10" viewBox="0 0 11 10"><path d="M0 0 H11 L5.5 10 Z" fill="#6a6a6a"/></svg>
<svg style="left:22px;top:181px" width="18" height="13" viewBox="0 0 18 13"><path d="M0.5 1.5 a1 1 0 0 1 1 -1 H6 L7.5 2.5 H13.5 a1 1 0 0 1 1 1 V5 H4.5 L1.5 12 H0.5 Z" fill="#c2c2c2"/><path d="M5 6 H17.5 L14.5 12.5 H2 Z" fill="#c2c2c2"/></svg>
<div class="t" style="left:44px;top:177px;font-weight:bold;color:#dcdcdc;letter-spacing:-.2px">Packages</div>
<svg style="left:24px;top:201px" width="10" height="11" viewBox="0 0 10 11"><path d="M0 0 V11 L10 5.5 Z" fill="#6a6a6a"/></svg>
<svg style="left:40px;top:201px" width="16" height="13" viewBox="0 0 16 13"><path d="M0.5 1.5 a1 1 0 0 1 1 -1 H6 L7.5 2.5 H14.5 a1 1 0 0 1 1 1 V11.5 a1 1 0 0 1 -1 1 H1.5 a1 1 0 0 1 -1 -1 Z" fill="#c2c2c2"/></svg>
<div class="t" style="left:60px;top:197px">AI Navigation</div>
<svg style="left:24px;top:221px" width="10" height="11" viewBox="0 0 10 11"><path d="M0 0 V11 L10 5.5 Z" fill="#6a6a6a"/></svg>
<svg style="left:40px;top:221px" width="16" height="13" viewBox="0 0 16 13"><path d="M0.5 1.5 a1 1 0 0 1 1 -1 H6 L7.5 2.5 H14.5 a1 1 0 0 1 1 1 V11.5 a1 1 0 0 1 -1 1 H1.5 a1 1 0 0 1 -1 -1 Z" fill="#c2c2c2"/></svg>
<div class="t" style="left:60px;top:217px">AR Foundation</div>
<svg style="left:24px;top:241px" width="10" height="11" viewBox="0 0 10 11"><path d="M0 0 V11 L10 5.5 Z" fill="#6a6a6a"/></svg>
<svg style="left:40px;top:241px" width="16" height="13" viewBox="0 0 16 13"><path d="M0.5 1.5 a1 1 0 0 1 1 -1 H6 L7.5 2.5 H14.5 a1 1 0 0 1 1 1 V11.5 a1 1 0 0 1 -1 1 H1.5 a1 1 0 0 1 -1 -1 Z" fill="#c2c2c2"/></svg>
<div class="t" style="left:60px;top:237px">Burst</div>
<svg style="left:24px;top:261px" width="10" height="11" viewBox="0 0 10 11"><path d="M0 0 V11 L10 5.5 Z" fill="#6a6a6a"/></svg>
<svg style="left:40px;top:261px" width="16" height="13" viewBox="0 0 16 13"><path d="M0.5 1.5 a1 1 0 0 1 1 -1 H6 L7.5 2.5 H14.5 a1 1 0 0 1 1 1 V11.5 a1 1 0 0 1 -1 1 H1.5 a1 1 0 0 1 -1 -1 Z" fill="#c2c2c2"/></svg>
<div class="t" style="left:60px;top:257px">Collections</div>
<svg style="left:24px;top:281px" width="10" height="11" viewBox="0 0 10 11"><path d="M0 0 V11 L10 5.5 Z" fill="#6a6a6a"/></svg>
<svg style="left:40px;top:281px" width="16" height="13" viewBox="0 0 16 13"><path d="M0.5 1.5 a1 1 0 0 1 1 -1 H6 L7.5 2.5 H14.5 a1 1 0 0 1 1 1 V11.5 a1 1 0 0 1 -1 1 H1.5 a1 1 0 0 1 -1 -1 Z" fill="#c2c2c2"/></svg>
<div class="t" style="left:60px;top:277px">Core RP Library</div>
<svg style="left:24px;top:301px" width="10" height="11" viewBox="0 0 10 11"><path d="M0 0 V11 L10 5.5 Z" fill="#6a6a6a"/></svg>
<svg style="left:40px;top:301px" width="16" height="13" viewBox="0 0 16 13"><path d="M0.5 1.5 a1 1 0 0 1 1 -1 H6 L7.5 2.5 H14.5 a1 1 0 0 1 1 1 V11.5 a1 1 0 0 1 -1 1 H1.5 a1 1 0 0 1 -1 -1 Z" fill="#c2c2c2"/></svg>
<div class="t" style="left:60px;top:297px">Custom NUnit</div>
<svg style="left:24px;top:321px" width="10" height="11" viewBox="0 0 10 11"><path d="M0 0 V11 L10 5.5 Z" fill="#6a6a6a"/></svg>
<svg style="left:40px;top:321px" width="16" height="13" viewBox="0 0 16 13"><path d="M0.5 1.5 a1 1 0 0 1 1 -1 H6 L7.5 2.5 H14.5 a1 1 0 0 1 1 1 V11.5 a1 1 0 0 1 -1 1 H1.5 a1 1 0 0 1 -1 -1 Z" fill="#c2c2c2"/></svg>
<div class="t" style="left:60px;top:317px">Editor Coroutines</div>
<svg style="left:24px;top:341px" width="10" height="11" viewBox="0 0 10 11"><path d="M0 0 V11 L10 5.5 Z" fill="#6a6a6a"/></svg>
<svg style="left:40px;top:341px" width="16" height="13" viewBox="0 0 16 13"><path d="M0.5 1.5 a1 1 0 0 1 1 -1 H6 L7.5 2.5 H14.5 a1 1 0 0 1 1 1 V11.5 a1 1 0 0 1 -1 1 H1.5 a1 1 0 0 1 -1 -1 Z" fill="#c2c2c2"/></svg>
<div class="t" style="left:60px;top:337px;letter-spacing:-.4px">Google ARCore XR Plugin</div>
</div>
<div class="a" style="left:903px;top:756px;width:16px;height:356px;background:#353535"></div>
<svg style="left:905px;top:763px" width="10" height="6" viewBox="0 0 10 6"><path d="M0 6 H10 L5 0 Z" fill="#c0c0c0"/></svg>
<svg style="left:905px;top:1100px" width="10" height="6" viewBox="0 0 10 6"><path d="M0 0 H10 L5 6 Z" fill="#c0c0c0"/></svg>
<div class="a" style="left:905px;top:806px;width:11px;height:146px;background:#5f5f5f;border-radius:5px"></div>
<div class="t" style="left:924px;top:759px;color:#a8a8a8">Assets</div>
<svg style="left:981px;top:762px" width="8" height="13" viewBox="0 0 8 13"><path d="M1.5 1 L6.5 6.5 L1.5 12" fill="none" stroke="#a0a0a0" stroke-width="1.5"/></svg>
<div class="t" style="left:994px;top:759px;font-weight:bold;color:#d8d8d8;font-size:15.5px;letter-spacing:-.2px">Scripts</div>
<svg style="left:941px;top:784px" width="16" height="18" viewBox="0 0 16 18"><path d="M1 1 H11 L15 5 V17 H1 Z" fill="#f4f4f4"/><path d="M11 1 V5 H15" fill="#cfcfcf"/><path d="M6.2 6 L5.2 14 M10 6 L9 14 M3.5 8.5 H12 M3 11.5 H11.5" stroke="#2f8a3c" stroke-width="1.5"/></svg>
<div class="t" style="left:961px;top:783px">LoadScene</div>
<svg style="left:941px;top:804px" width="16" height="18" viewBox="0 0 16 18"><path d="M1 1 H11 L15 5 V17 H1 Z" fill="#f4f4f4"/><path d="M11 1 V5 H15" fill="#cfcfcf"/><path d="M6.2 6 L5.2 14 M10 6 L9 14 M3.5 8.5 H12 M3 11.5 H11.5" stroke="#2f8a3c" stroke-width="1.5"/></svg>
<div class="t" style="left:961px;top:803px">RotationController</div>
<!--END:PROJ-->
<!--SECTION:STATUS--><div class="a" style="left:0;top:1113px;width:1919px;height:25px;background:#151515"></div>
<div class="a" style="left:1821px;top:1113px;width:1px;height:25px;background:#2a2a2a"></div>
<div class="a" style="left:1854px;top:1113px;width:1px;height:25px;background:#2a2a2a"></div>
<div class="a" style="left:1886px;top:1113px;width:1px;height:25px;background:#2a2a2a"></div>
<svg style="left:1828px;top:1118px" width="19" height="19" viewBox="0 0 20 20"><ellipse cx="10" cy="11.5" rx="5" ry="6.3" fill="#c4c4c4"/><circle cx="10" cy="4.8" r="2.6" fill="#c4c4c4"/><g stroke="#c4c4c4" stroke-width="1.3" fill="none"><path d="M5 8 L2 5.5 M15 8 L18 5.5 M4.8 12 H1.5 M15.2 12 H18.5 M5.5 15.5 L2.5 18.5 M14.5 15.5 L17.5 18.5"/></g><path d="M2 2 L18 19" stroke="#191919" stroke-width="3"/><path d="M1.5 2.5 L17.5 19.5" stroke="#c4c4c4" stroke-width="1.4"/></svg>
<svg style="left:1861px;top:1118px" width="19" height="19" viewBox="0 0 19 19"><g fill="#c4c4c4"><ellipse cx="9" cy="4" rx="7" ry="2.8"/><path d="M2 6 Q9 10 16 6 V9 Q9 13 2 9 Z M2 11 Q9 15 16 11 V14 Q9 18 2 14 Z"/></g><path d="M1.5 1.5 L17.5 18" stroke="#191919" stroke-width="3"/><path d="M1 2 L17 18.5" stroke="#c4c4c4" stroke-width="1.4"/></svg>
<svg style="left:1893px;top:1118px" width="19" height="19" viewBox="0 0 19 19"><circle cx="9.5" cy="9.5" r="8" fill="none" stroke="#c4c4c4" stroke-width="1.4"/><path d="M5.5 9.5 L8.5 12.5 L13.5 6.5" fill="none" stroke="#c4c4c4" stroke-width="1.6"/></svg>
<!--END:STATUS-->
<!--SECTION:POPUPS--><div class="pop" style="left:1304px;top:759px;width:312px;height:344px"></div>
<div class="a" style="left:1311px;top:970px;width:298px;height:26px;background:#f0f0f0;border-radius:4px"></div>
<div class="t" style="left:1349px;top:766px;color:#1a1a1a;font-size:15px;letter-spacing:-.1px">bool enabled</div>
<div class="t" style="left:1349px;top:792px;color:#1a1a1a;font-size:15px;letter-spacing:-.1px">string name</div>
<div class="t" style="left:1349px;top:818px;color:#1a1a1a;font-size:15px;letter-spacing:-.1px">bool runInEditMode</div>
<div class="t" style="left:1349px;top:844px;color:#1a1a1a;font-size:15px;letter-spacing:-.1px">string tag</div>
<div class="t" style="left:1349px;top:870px;color:#1a1a1a;font-size:15px;letter-spacing:-.1px">bool useGUILayout</div>
<div class="t" style="left:1349px;top:896px;color:#1a1a1a;font-size:15px;letter-spacing:-.1px">BroadcastMessage (string)</div>
<div class="t" style="left:1349px;top:922px;color:#1a1a1a;font-size:15px;letter-spacing:-.1px">CancelInvoke (string)</div>
<div class="t" style="left:1349px;top:948px;color:#1a1a1a;font-size:15px;letter-spacing:-.1px">CancelInvoke ()</div>
<div class="t" style="left:1349px;top:974px;color:#1a1a1a;font-size:15px;letter-spacing:-.1px">ChangeScene (string)</div>
<div class="t" style="left:1349px;top:1000px;color:#1a1a1a;font-size:15px;letter-spacing:-.1px">SendMessage (string)</div>
<div class="t" style="left:1349px;top:1026px;color:#1a1a1a;font-size:15px;letter-spacing:-.1px">SendMessageUpwards (string)</div>
<div class="t" style="left:1349px;top:1052px;color:#1a1a1a;font-size:15px;letter-spacing:-.1px">StopAllCoroutines ()</div>
<div class="t" style="left:1349px;top:1078px;color:#1a1a1a;font-size:15px;letter-spacing:-.1px">StopCoroutine (string)</div>
<div class="pop" style="left:1614px;top:670px;width:208px;height:121px"></div>
<div class="a" style="left:1621px;top:762px;width:193px;height:26px;background:#f0f0f0;border-radius:4px"></div>
<div class="a" style="left:1624px;top:704px;width:187px;height:1px;background:#dcdcdc"></div>
<svg style="left:1628px;top:681px" width="12" height="10" viewBox="0 0 12 10"><path d="M1 5 L4.5 8.5 L11 1" fill="none" stroke="#222" stroke-width="1.2"/></svg>
<div class="t" style="left:1659px;top:677px;color:#1a1a1a;font-size:15px;letter-spacing:-.1px">No Function</div>
<div class="t" style="left:1659px;top:714px;color:#1a1a1a;font-size:15px;letter-spacing:-.1px">GameObject</div>
<svg style="left:1796px;top:718px" width="7" height="11" viewBox="0 0 7 11"><path d="M1 1 L5.5 5.5 L1 10" fill="none" stroke="#222" stroke-width="1.3"/></svg>
<div class="t" style="left:1659px;top:740px;color:#1a1a1a;font-size:15px;letter-spacing:-.1px">RectTransform</div>
<svg style="left:1796px;top:744px" width="7" height="11" viewBox="0 0 7 11"><path d="M1 1 L5.5 5.5 L1 10" fill="none" stroke="#222" stroke-width="1.3"/></svg>
<div class="t" style="left:1659px;top:766px;color:#1a1a1a;font-size:15px;letter-spacing:-.1px">LoadScene</div>
<svg style="left:1796px;top:770px" width="7" height="11" viewBox="0 0 7 11"><path d="M1 1 L5.5 5.5 L1 10" fill="none" stroke="#222" stroke-width="1.3"/></svg>
<!--END:POPUPS-->
<!--SECTION:LINES--><svg style="left:0;top:0;pointer-events:none" width="1919" height="1138" viewBox="0 0 1919 1138"><path d="M1030 284 L1499 676" stroke="#ececec" stroke-width="1.15" fill="none"/><path d="M1499 676 L1490.0 672.7 L1494.1 667.8 Z" fill="#f4f4f4"/><path d="M1574 583 L1661 670" stroke="#ececec" stroke-width="1.15" fill="none"/><path d="M1661 670 L1652.4 665.9 L1656.9 661.4 Z" fill="#f4f4f4"/><path d="M1837 913 L1744 790" stroke="#ececec" stroke-width="1.15" fill="none"/><path d="M1744 790 L1752.0 795.2 L1746.9 799.1 Z" fill="#f4f4f4"/><path d="M982 929 L1345 984" stroke="#ececec" stroke-width="1.15" fill="none"/><path d="M1345 984 L1335.6 985.8 L1336.6 979.5 Z" fill="#f4f4f4"/><path d="M1122 423 L1037 309" stroke="#ececec" stroke-width="1.15" fill="none"/><path d="M1037 309 L1044.9 314.3 L1039.8 318.1 Z" fill="#f4f4f4"/></svg>
<!--END:LINES-->
</body></html>
